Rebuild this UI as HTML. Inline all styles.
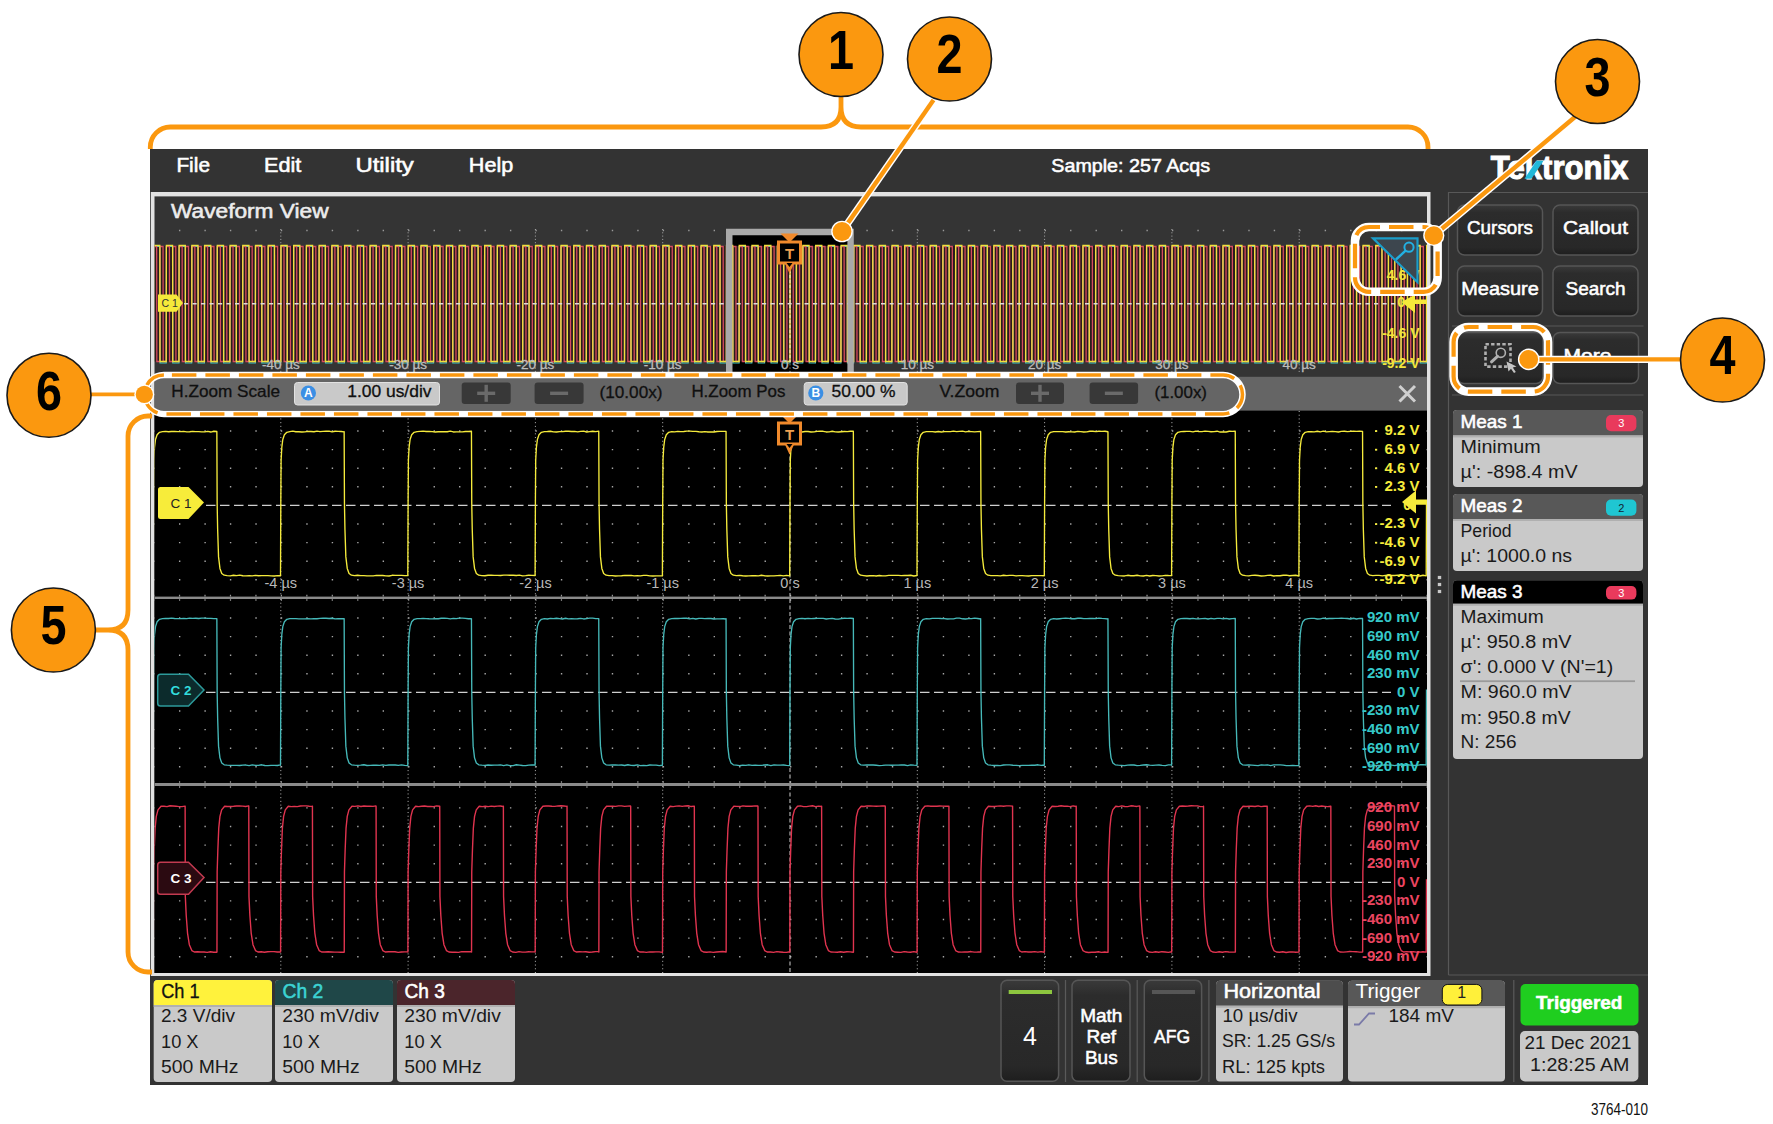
<!DOCTYPE html>
<html><head><meta charset="utf-8"><title>Oscilloscope zoom view</title>
<style>html,body{margin:0;padding:0;background:#fff}svg{display:block}text{font-family:"Liberation Sans",sans-serif}</style></head>
<body>
<svg width="1773" height="1124" viewBox="0 0 1773 1124" font-family="Liberation Sans, sans-serif">
<defs>
<linearGradient id="btn" x1="0" y1="0" x2="0" y2="1"><stop offset="0" stop-color="#3a3a3a"/><stop offset="0.15" stop-color="#2c2c2c"/><stop offset="0.85" stop-color="#282828"/><stop offset="1" stop-color="#1e1e1e"/></linearGradient>
<clipPath id="cpO"><rect x="154.5" y="229" width="1272.5" height="143"/></clipPath>
<clipPath id="cp1"><rect x="154.5" y="411" width="1272.5" height="186"/></clipPath>
<clipPath id="cp2"><rect x="154.5" y="599" width="1272.5" height="184"/></clipPath>
<clipPath id="cp3"><rect x="154.5" y="786" width="1272.5" height="187"/></clipPath>
</defs>
<rect width="1773" height="1124" fill="#fff"/>
<rect x="150" y="149" width="1498" height="936" fill="#333"/>
<rect x="150.8" y="192" width="1279.7" height="784" fill="#e2e2e2"/>
<rect x="154.5" y="196.4" width="1272.5" height="776.6" fill="#343434"/>
<text x="176.4" y="171.8" font-size="20" fill="#fff" font-weight="normal" text-anchor="start" textLength="33.6" lengthAdjust="spacingAndGlyphs"  stroke="#fff" stroke-width="0.55">File</text>
<text x="264" y="171.8" font-size="20" fill="#fff" font-weight="normal" text-anchor="start" textLength="37.3" lengthAdjust="spacingAndGlyphs"  stroke="#fff" stroke-width="0.55">Edit</text>
<text x="355.4" y="171.8" font-size="20" fill="#fff" font-weight="normal" text-anchor="start" textLength="58.4" lengthAdjust="spacingAndGlyphs"  stroke="#fff" stroke-width="0.55">Utility</text>
<text x="468.8" y="171.8" font-size="20" fill="#fff" font-weight="normal" text-anchor="start" textLength="44.4" lengthAdjust="spacingAndGlyphs"  stroke="#fff" stroke-width="0.55">Help</text>
<text x="1051.3" y="172.3" font-size="19" fill="#fff" font-weight="normal" text-anchor="start" textLength="158.7" lengthAdjust="spacingAndGlyphs"  stroke="#fff" stroke-width="0.55">Sample: 257 Acqs</text>
<text x="171" y="218" font-size="20" fill="#ececec" font-weight="normal" text-anchor="start" textLength="157.6" lengthAdjust="spacingAndGlyphs"  stroke="#ececec" stroke-width="0.55">Waveform View</text>
<text x="1490.8" y="178.6" font-size="34" fill="#fff" font-weight="bold" text-anchor="start" textLength="137.6" lengthAdjust="spacingAndGlyphs" stroke="#fff" stroke-width="1.1">Tektronix</text>
<path d="M1524.5 178.8 L1531.5 178.8 L1543.5 160.8 L1536.5 160.8 Z" fill="#22b8d8"/>
<g clip-path="url(#cpO)">
<rect x="732.5" y="233.5" width="115.5" height="140" fill="#000"/>
<line x1="153.5" y1="230.5" x2="1427" y2="230.5" stroke="#999" stroke-width="1.3" stroke-dasharray="1.4 24.060"/>
<line x1="280.8" y1="229" x2="280.8" y2="372" stroke="#aaa" stroke-width="1" stroke-dasharray="1 2.3"/>
<line x1="408.1" y1="229" x2="408.1" y2="372" stroke="#aaa" stroke-width="1" stroke-dasharray="1 2.3"/>
<line x1="535.4" y1="229" x2="535.4" y2="372" stroke="#aaa" stroke-width="1" stroke-dasharray="1 2.3"/>
<line x1="662.7" y1="229" x2="662.7" y2="372" stroke="#aaa" stroke-width="1" stroke-dasharray="1 2.3"/>
<line x1="790.0" y1="229" x2="790.0" y2="372" stroke="#aaa" stroke-width="1" stroke-dasharray="1 2.3"/>
<line x1="917.3" y1="229" x2="917.3" y2="372" stroke="#aaa" stroke-width="1" stroke-dasharray="1 2.3"/>
<line x1="1044.6" y1="229" x2="1044.6" y2="372" stroke="#aaa" stroke-width="1" stroke-dasharray="1 2.3"/>
<line x1="1171.9" y1="229" x2="1171.9" y2="372" stroke="#aaa" stroke-width="1" stroke-dasharray="1 2.3"/>
<line x1="1299.2" y1="229" x2="1299.2" y2="372" stroke="#aaa" stroke-width="1" stroke-dasharray="1 2.3"/>
<rect x="154.5" y="246" width="1272.5" height="115.5" fill="#2a1c1a"/>
<polyline points="140.77,363.00 140.77,363.00 140.92,246.50 147.13,246.50 147.28,363.00 153.50,363.00 153.65,246.50 159.86,246.50 160.01,363.00 166.23,363.00 166.38,246.50 172.59,246.50 172.74,363.00 178.96,363.00 179.11,246.50 185.32,246.50 185.47,363.00 191.69,363.00 191.84,246.50 198.05,246.50 198.20,363.00 204.42,363.00 204.57,246.50 210.78,246.50 210.93,363.00 217.15,363.00 217.30,246.50 223.51,246.50 223.66,363.00 229.88,363.00 230.03,246.50 236.24,246.50 236.39,363.00 242.61,363.00 242.76,246.50 248.97,246.50 249.12,363.00 255.34,363.00 255.49,246.50 261.70,246.50 261.85,363.00 268.07,363.00 268.22,246.50 274.43,246.50 274.58,363.00 280.80,363.00 280.95,246.50 287.16,246.50 287.31,363.00 293.53,363.00 293.68,246.50 299.89,246.50 300.04,363.00 306.26,363.00 306.41,246.50 312.62,246.50 312.77,363.00 318.99,363.00 319.14,246.50 325.35,246.50 325.50,363.00 331.72,363.00 331.87,246.50 338.08,246.50 338.23,363.00 344.45,363.00 344.60,246.50 350.81,246.50 350.96,363.00 357.18,363.00 357.33,246.50 363.54,246.50 363.69,363.00 369.91,363.00 370.06,246.50 376.27,246.50 376.42,363.00 382.64,363.00 382.79,246.50 389.00,246.50 389.15,363.00 395.37,363.00 395.52,246.50 401.73,246.50 401.88,363.00 408.10,363.00 408.25,246.50 414.46,246.50 414.61,363.00 420.83,363.00 420.98,246.50 427.19,246.50 427.34,363.00 433.56,363.00 433.71,246.50 439.92,246.50 440.07,363.00 446.29,363.00 446.44,246.50 452.65,246.50 452.80,363.00 459.02,363.00 459.17,246.50 465.38,246.50 465.53,363.00 471.75,363.00 471.90,246.50 478.11,246.50 478.26,363.00 484.48,363.00 484.63,246.50 490.84,246.50 490.99,363.00 497.21,363.00 497.36,246.50 503.57,246.50 503.72,363.00 509.94,363.00 510.09,246.50 516.30,246.50 516.45,363.00 522.67,363.00 522.82,246.50 529.03,246.50 529.18,363.00 535.40,363.00 535.55,246.50 541.76,246.50 541.91,363.00 548.13,363.00 548.28,246.50 554.49,246.50 554.64,363.00 560.86,363.00 561.01,246.50 567.22,246.50 567.37,363.00 573.59,363.00 573.74,246.50 579.95,246.50 580.10,363.00 586.32,363.00 586.47,246.50 592.68,246.50 592.83,363.00 599.05,363.00 599.20,246.50 605.41,246.50 605.56,363.00 611.78,363.00 611.93,246.50 618.14,246.50 618.29,363.00 624.51,363.00 624.66,246.50 630.87,246.50 631.02,363.00 637.24,363.00 637.39,246.50 643.60,246.50 643.75,363.00 649.97,363.00 650.12,246.50 656.33,246.50 656.48,363.00 662.70,363.00 662.85,246.50 669.06,246.50 669.21,363.00 675.43,363.00 675.58,246.50 681.79,246.50 681.94,363.00 688.16,363.00 688.31,246.50 694.52,246.50 694.67,363.00 700.89,363.00 701.04,246.50 707.25,246.50 707.40,363.00 713.62,363.00 713.77,246.50 719.98,246.50 720.13,363.00 726.35,363.00 726.50,246.50 732.71,246.50 732.86,363.00 739.08,363.00 739.23,246.50 745.44,246.50 745.59,363.00 751.81,363.00 751.96,246.50 758.17,246.50 758.32,363.00 764.54,363.00 764.69,246.50 770.90,246.50 771.05,363.00 777.27,363.00 777.42,246.50 783.63,246.50 783.78,363.00 790.00,363.00 790.15,246.50 796.37,246.50 796.51,363.00 802.73,363.00 802.88,246.50 809.10,246.50 809.25,363.00 815.46,363.00 815.61,246.50 821.83,246.50 821.98,363.00 828.19,363.00 828.34,246.50 834.56,246.50 834.71,363.00 840.92,363.00 841.07,246.50 847.29,246.50 847.44,363.00 853.65,363.00 853.80,246.50 860.02,246.50 860.17,363.00 866.38,363.00 866.53,246.50 872.75,246.50 872.90,363.00 879.11,363.00 879.26,246.50 885.48,246.50 885.63,363.00 891.84,363.00 891.99,246.50 898.21,246.50 898.36,363.00 904.57,363.00 904.72,246.50 910.94,246.50 911.09,363.00 917.30,363.00 917.45,246.50 923.67,246.50 923.82,363.00 930.03,363.00 930.18,246.50 936.40,246.50 936.55,363.00 942.76,363.00 942.91,246.50 949.13,246.50 949.28,363.00 955.49,363.00 955.64,246.50 961.86,246.50 962.01,363.00 968.22,363.00 968.37,246.50 974.59,246.50 974.74,363.00 980.95,363.00 981.10,246.50 987.32,246.50 987.47,363.00 993.68,363.00 993.83,246.50 1000.05,246.50 1000.20,363.00 1006.41,363.00 1006.56,246.50 1012.78,246.50 1012.93,363.00 1019.14,363.00 1019.29,246.50 1025.51,246.50 1025.66,363.00 1031.87,363.00 1032.02,246.50 1038.24,246.50 1038.39,363.00 1044.60,363.00 1044.75,246.50 1050.97,246.50 1051.12,363.00 1057.33,363.00 1057.48,246.50 1063.70,246.50 1063.85,363.00 1070.06,363.00 1070.21,246.50 1076.43,246.50 1076.58,363.00 1082.79,363.00 1082.94,246.50 1089.16,246.50 1089.31,363.00 1095.52,363.00 1095.67,246.50 1101.89,246.50 1102.04,363.00 1108.25,363.00 1108.40,246.50 1114.62,246.50 1114.77,363.00 1120.98,363.00 1121.13,246.50 1127.35,246.50 1127.50,363.00 1133.71,363.00 1133.86,246.50 1140.08,246.50 1140.23,363.00 1146.44,363.00 1146.59,246.50 1152.81,246.50 1152.96,363.00 1159.17,363.00 1159.32,246.50 1165.54,246.50 1165.69,363.00 1171.90,363.00 1172.05,246.50 1178.27,246.50 1178.42,363.00 1184.63,363.00 1184.78,246.50 1191.00,246.50 1191.15,363.00 1197.36,363.00 1197.51,246.50 1203.73,246.50 1203.88,363.00 1210.09,363.00 1210.24,246.50 1216.46,246.50 1216.61,363.00 1222.82,363.00 1222.97,246.50 1229.19,246.50 1229.34,363.00 1235.55,363.00 1235.70,246.50 1241.92,246.50 1242.07,363.00 1248.28,363.00 1248.43,246.50 1254.65,246.50 1254.80,363.00 1261.01,363.00 1261.16,246.50 1267.38,246.50 1267.53,363.00 1273.74,363.00 1273.89,246.50 1280.11,246.50 1280.26,363.00 1286.47,363.00 1286.62,246.50 1292.84,246.50 1292.99,363.00 1299.20,363.00 1299.35,246.50 1305.57,246.50 1305.72,363.00 1311.93,363.00 1312.08,246.50 1318.30,246.50 1318.45,363.00 1324.66,363.00 1324.81,246.50 1331.03,246.50 1331.18,363.00 1337.39,363.00 1337.54,246.50 1343.76,246.50 1343.91,363.00 1350.12,363.00 1350.27,246.50 1356.49,246.50 1356.64,363.00 1362.85,363.00 1363.00,246.50 1369.22,246.50 1369.37,363.00 1375.58,363.00 1375.73,246.50 1381.95,246.50 1382.10,363.00 1388.31,363.00 1388.46,246.50 1394.68,246.50 1394.83,363.00 1401.04,363.00 1401.19,246.50 1407.41,246.50 1407.56,363.00 1413.77,363.00 1413.92,246.50 1420.14,246.50 1420.29,363.00 1426.50,363.00 1426.65,246.50 1432.87,246.50 1433.02,363.00 1439.23,363.00 1439.38,246.50 1445.60,246.50 1445.75,363.00" fill="none" stroke="#3cc" stroke-width="1.2"/>
<polyline points="147.13,361.50 147.13,361.50 147.28,246.50 150.32,246.50 150.47,361.50 153.50,361.50 153.65,246.50 156.68,246.50 156.83,361.50 159.86,361.50 160.01,246.50 163.05,246.50 163.20,361.50 166.23,361.50 166.38,246.50 169.41,246.50 169.56,361.50 172.59,361.50 172.74,246.50 175.78,246.50 175.93,361.50 178.96,361.50 179.11,246.50 182.14,246.50 182.29,361.50 185.32,361.50 185.47,246.50 188.51,246.50 188.66,361.50 191.69,361.50 191.84,246.50 194.87,246.50 195.02,361.50 198.05,361.50 198.20,246.50 201.24,246.50 201.39,361.50 204.42,361.50 204.57,246.50 207.60,246.50 207.75,361.50 210.78,361.50 210.93,246.50 213.97,246.50 214.12,361.50 217.15,361.50 217.30,246.50 220.33,246.50 220.48,361.50 223.51,361.50 223.66,246.50 226.70,246.50 226.85,361.50 229.88,361.50 230.03,246.50 233.06,246.50 233.21,361.50 236.24,361.50 236.39,246.50 239.43,246.50 239.58,361.50 242.61,361.50 242.76,246.50 245.79,246.50 245.94,361.50 248.97,361.50 249.12,246.50 252.16,246.50 252.31,361.50 255.34,361.50 255.49,246.50 258.52,246.50 258.67,361.50 261.70,361.50 261.85,246.50 264.89,246.50 265.04,361.50 268.07,361.50 268.22,246.50 271.25,246.50 271.40,361.50 274.43,361.50 274.58,246.50 277.62,246.50 277.77,361.50 280.80,361.50 280.95,246.50 283.98,246.50 284.13,361.50 287.16,361.50 287.31,246.50 290.35,246.50 290.50,361.50 293.53,361.50 293.68,246.50 296.71,246.50 296.86,361.50 299.89,361.50 300.04,246.50 303.08,246.50 303.23,361.50 306.26,361.50 306.41,246.50 309.44,246.50 309.59,361.50 312.62,361.50 312.77,246.50 315.81,246.50 315.96,361.50 318.99,361.50 319.14,246.50 322.17,246.50 322.32,361.50 325.35,361.50 325.50,246.50 328.54,246.50 328.69,361.50 331.72,361.50 331.87,246.50 334.90,246.50 335.05,361.50 338.08,361.50 338.23,246.50 341.27,246.50 341.42,361.50 344.45,361.50 344.60,246.50 347.63,246.50 347.78,361.50 350.81,361.50 350.96,246.50 354.00,246.50 354.15,361.50 357.18,361.50 357.33,246.50 360.36,246.50 360.51,361.50 363.54,361.50 363.69,246.50 366.73,246.50 366.88,361.50 369.91,361.50 370.06,246.50 373.09,246.50 373.24,361.50 376.27,361.50 376.42,246.50 379.46,246.50 379.61,361.50 382.64,361.50 382.79,246.50 385.82,246.50 385.97,361.50 389.00,361.50 389.15,246.50 392.19,246.50 392.34,361.50 395.37,361.50 395.52,246.50 398.55,246.50 398.70,361.50 401.73,361.50 401.88,246.50 404.92,246.50 405.07,361.50 408.10,361.50 408.25,246.50 411.28,246.50 411.43,361.50 414.46,361.50 414.61,246.50 417.65,246.50 417.80,361.50 420.83,361.50 420.98,246.50 424.01,246.50 424.16,361.50 427.19,361.50 427.34,246.50 430.38,246.50 430.53,361.50 433.56,361.50 433.71,246.50 436.74,246.50 436.89,361.50 439.92,361.50 440.07,246.50 443.11,246.50 443.26,361.50 446.29,361.50 446.44,246.50 449.47,246.50 449.62,361.50 452.65,361.50 452.80,246.50 455.84,246.50 455.99,361.50 459.02,361.50 459.17,246.50 462.20,246.50 462.35,361.50 465.38,361.50 465.53,246.50 468.57,246.50 468.72,361.50 471.75,361.50 471.90,246.50 474.93,246.50 475.08,361.50 478.11,361.50 478.26,246.50 481.30,246.50 481.45,361.50 484.48,361.50 484.63,246.50 487.66,246.50 487.81,361.50 490.84,361.50 490.99,246.50 494.03,246.50 494.18,361.50 497.21,361.50 497.36,246.50 500.39,246.50 500.54,361.50 503.57,361.50 503.72,246.50 506.76,246.50 506.91,361.50 509.94,361.50 510.09,246.50 513.12,246.50 513.27,361.50 516.30,361.50 516.45,246.50 519.49,246.50 519.64,361.50 522.67,361.50 522.82,246.50 525.85,246.50 526.00,361.50 529.03,361.50 529.18,246.50 532.22,246.50 532.37,361.50 535.40,361.50 535.55,246.50 538.58,246.50 538.73,361.50 541.76,361.50 541.91,246.50 544.95,246.50 545.10,361.50 548.13,361.50 548.28,246.50 551.31,246.50 551.46,361.50 554.49,361.50 554.64,246.50 557.68,246.50 557.83,361.50 560.86,361.50 561.01,246.50 564.04,246.50 564.19,361.50 567.22,361.50 567.37,246.50 570.41,246.50 570.56,361.50 573.59,361.50 573.74,246.50 576.77,246.50 576.92,361.50 579.95,361.50 580.10,246.50 583.14,246.50 583.29,361.50 586.32,361.50 586.47,246.50 589.50,246.50 589.65,361.50 592.68,361.50 592.83,246.50 595.87,246.50 596.02,361.50 599.05,361.50 599.20,246.50 602.23,246.50 602.38,361.50 605.41,361.50 605.56,246.50 608.60,246.50 608.75,361.50 611.78,361.50 611.93,246.50 614.96,246.50 615.11,361.50 618.14,361.50 618.29,246.50 621.33,246.50 621.48,361.50 624.51,361.50 624.66,246.50 627.69,246.50 627.84,361.50 630.87,361.50 631.02,246.50 634.06,246.50 634.21,361.50 637.24,361.50 637.39,246.50 640.42,246.50 640.57,361.50 643.60,361.50 643.75,246.50 646.79,246.50 646.94,361.50 649.97,361.50 650.12,246.50 653.15,246.50 653.30,361.50 656.33,361.50 656.48,246.50 659.52,246.50 659.67,361.50 662.70,361.50 662.85,246.50 665.88,246.50 666.03,361.50 669.06,361.50 669.21,246.50 672.25,246.50 672.40,361.50 675.43,361.50 675.58,246.50 678.61,246.50 678.76,361.50 681.79,361.50 681.94,246.50 684.98,246.50 685.13,361.50 688.16,361.50 688.31,246.50 691.34,246.50 691.49,361.50 694.52,361.50 694.67,246.50 697.71,246.50 697.86,361.50 700.89,361.50 701.04,246.50 704.07,246.50 704.22,361.50 707.25,361.50 707.40,246.50 710.44,246.50 710.59,361.50 713.62,361.50 713.77,246.50 716.80,246.50 716.95,361.50 719.98,361.50 720.13,246.50 723.17,246.50 723.32,361.50 726.35,361.50 726.50,246.50 729.53,246.50 729.68,361.50 732.71,361.50 732.86,246.50 735.90,246.50 736.05,361.50 739.08,361.50 739.23,246.50 742.26,246.50 742.41,361.50 745.44,361.50 745.59,246.50 748.63,246.50 748.78,361.50 751.81,361.50 751.96,246.50 754.99,246.50 755.14,361.50 758.17,361.50 758.32,246.50 761.36,246.50 761.51,361.50 764.54,361.50 764.69,246.50 767.72,246.50 767.87,361.50 770.90,361.50 771.05,246.50 774.09,246.50 774.24,361.50 777.27,361.50 777.42,246.50 780.45,246.50 780.60,361.50 783.63,361.50 783.78,246.50 786.82,246.50 786.97,361.50 790.00,361.50 790.15,246.50 793.18,246.50 793.33,361.50 796.37,361.50 796.51,246.50 799.55,246.50 799.70,361.50 802.73,361.50 802.88,246.50 805.91,246.50 806.06,361.50 809.10,361.50 809.25,246.50 812.28,246.50 812.43,361.50 815.46,361.50 815.61,246.50 818.64,246.50 818.79,361.50 821.83,361.50 821.98,246.50 825.01,246.50 825.16,361.50 828.19,361.50 828.34,246.50 831.37,246.50 831.52,361.50 834.56,361.50 834.71,246.50 837.74,246.50 837.89,361.50 840.92,361.50 841.07,246.50 844.10,246.50 844.25,361.50 847.29,361.50 847.44,246.50 850.47,246.50 850.62,361.50 853.65,361.50 853.80,246.50 856.83,246.50 856.98,361.50 860.02,361.50 860.17,246.50 863.20,246.50 863.35,361.50 866.38,361.50 866.53,246.50 869.56,246.50 869.71,361.50 872.75,361.50 872.90,246.50 875.93,246.50 876.08,361.50 879.11,361.50 879.26,246.50 882.29,246.50 882.44,361.50 885.48,361.50 885.63,246.50 888.66,246.50 888.81,361.50 891.84,361.50 891.99,246.50 895.02,246.50 895.17,361.50 898.21,361.50 898.36,246.50 901.39,246.50 901.54,361.50 904.57,361.50 904.72,246.50 907.75,246.50 907.90,361.50 910.94,361.50 911.09,246.50 914.12,246.50 914.27,361.50 917.30,361.50 917.45,246.50 920.48,246.50 920.63,361.50 923.67,361.50 923.82,246.50 926.85,246.50 927.00,361.50 930.03,361.50 930.18,246.50 933.21,246.50 933.36,361.50 936.40,361.50 936.55,246.50 939.58,246.50 939.73,361.50 942.76,361.50 942.91,246.50 945.94,246.50 946.09,361.50 949.13,361.50 949.28,246.50 952.31,246.50 952.46,361.50 955.49,361.50 955.64,246.50 958.67,246.50 958.82,361.50 961.86,361.50 962.01,246.50 965.04,246.50 965.19,361.50 968.22,361.50 968.37,246.50 971.40,246.50 971.55,361.50 974.59,361.50 974.74,246.50 977.77,246.50 977.92,361.50 980.95,361.50 981.10,246.50 984.13,246.50 984.28,361.50 987.32,361.50 987.47,246.50 990.50,246.50 990.65,361.50 993.68,361.50 993.83,246.50 996.86,246.50 997.01,361.50 1000.05,361.50 1000.20,246.50 1003.23,246.50 1003.38,361.50 1006.41,361.50 1006.56,246.50 1009.59,246.50 1009.74,361.50 1012.78,361.50 1012.93,246.50 1015.96,246.50 1016.11,361.50 1019.14,361.50 1019.29,246.50 1022.32,246.50 1022.47,361.50 1025.51,361.50 1025.66,246.50 1028.69,246.50 1028.84,361.50 1031.87,361.50 1032.02,246.50 1035.05,246.50 1035.20,361.50 1038.24,361.50 1038.39,246.50 1041.42,246.50 1041.57,361.50 1044.60,361.50 1044.75,246.50 1047.78,246.50 1047.93,361.50 1050.97,361.50 1051.12,246.50 1054.15,246.50 1054.30,361.50 1057.33,361.50 1057.48,246.50 1060.51,246.50 1060.66,361.50 1063.70,361.50 1063.85,246.50 1066.88,246.50 1067.03,361.50 1070.06,361.50 1070.21,246.50 1073.24,246.50 1073.39,361.50 1076.43,361.50 1076.58,246.50 1079.61,246.50 1079.76,361.50 1082.79,361.50 1082.94,246.50 1085.97,246.50 1086.12,361.50 1089.16,361.50 1089.31,246.50 1092.34,246.50 1092.49,361.50 1095.52,361.50 1095.67,246.50 1098.70,246.50 1098.85,361.50 1101.89,361.50 1102.04,246.50 1105.07,246.50 1105.22,361.50 1108.25,361.50 1108.40,246.50 1111.43,246.50 1111.58,361.50 1114.62,361.50 1114.77,246.50 1117.80,246.50 1117.95,361.50 1120.98,361.50 1121.13,246.50 1124.16,246.50 1124.31,361.50 1127.35,361.50 1127.50,246.50 1130.53,246.50 1130.68,361.50 1133.71,361.50 1133.86,246.50 1136.89,246.50 1137.04,361.50 1140.08,361.50 1140.23,246.50 1143.26,246.50 1143.41,361.50 1146.44,361.50 1146.59,246.50 1149.62,246.50 1149.77,361.50 1152.81,361.50 1152.96,246.50 1155.99,246.50 1156.14,361.50 1159.17,361.50 1159.32,246.50 1162.35,246.50 1162.50,361.50 1165.54,361.50 1165.69,246.50 1168.72,246.50 1168.87,361.50 1171.90,361.50 1172.05,246.50 1175.08,246.50 1175.23,361.50 1178.27,361.50 1178.42,246.50 1181.45,246.50 1181.60,361.50 1184.63,361.50 1184.78,246.50 1187.81,246.50 1187.96,361.50 1191.00,361.50 1191.15,246.50 1194.18,246.50 1194.33,361.50 1197.36,361.50 1197.51,246.50 1200.54,246.50 1200.69,361.50 1203.73,361.50 1203.88,246.50 1206.91,246.50 1207.06,361.50 1210.09,361.50 1210.24,246.50 1213.27,246.50 1213.42,361.50 1216.46,361.50 1216.61,246.50 1219.64,246.50 1219.79,361.50 1222.82,361.50 1222.97,246.50 1226.00,246.50 1226.15,361.50 1229.19,361.50 1229.34,246.50 1232.37,246.50 1232.52,361.50 1235.55,361.50 1235.70,246.50 1238.73,246.50 1238.88,361.50 1241.92,361.50 1242.07,246.50 1245.10,246.50 1245.25,361.50 1248.28,361.50 1248.43,246.50 1251.46,246.50 1251.61,361.50 1254.65,361.50 1254.80,246.50 1257.83,246.50 1257.98,361.50 1261.01,361.50 1261.16,246.50 1264.19,246.50 1264.34,361.50 1267.38,361.50 1267.53,246.50 1270.56,246.50 1270.71,361.50 1273.74,361.50 1273.89,246.50 1276.92,246.50 1277.07,361.50 1280.11,361.50 1280.26,246.50 1283.29,246.50 1283.44,361.50 1286.47,361.50 1286.62,246.50 1289.65,246.50 1289.80,361.50 1292.84,361.50 1292.99,246.50 1296.02,246.50 1296.17,361.50 1299.20,361.50 1299.35,246.50 1302.38,246.50 1302.53,361.50 1305.57,361.50 1305.72,246.50 1308.75,246.50 1308.90,361.50 1311.93,361.50 1312.08,246.50 1315.11,246.50 1315.26,361.50 1318.30,361.50 1318.45,246.50 1321.48,246.50 1321.63,361.50 1324.66,361.50 1324.81,246.50 1327.84,246.50 1327.99,361.50 1331.03,361.50 1331.18,246.50 1334.21,246.50 1334.36,361.50 1337.39,361.50 1337.54,246.50 1340.57,246.50 1340.72,361.50 1343.76,361.50 1343.91,246.50 1346.94,246.50 1347.09,361.50 1350.12,361.50 1350.27,246.50 1353.30,246.50 1353.45,361.50 1356.49,361.50 1356.64,246.50 1359.67,246.50 1359.82,361.50 1362.85,361.50 1363.00,246.50 1366.03,246.50 1366.18,361.50 1369.22,361.50 1369.37,246.50 1372.40,246.50 1372.55,361.50 1375.58,361.50 1375.73,246.50 1378.76,246.50 1378.91,361.50 1381.95,361.50 1382.10,246.50 1385.13,246.50 1385.28,361.50 1388.31,361.50 1388.46,246.50 1391.49,246.50 1391.64,361.50 1394.68,361.50 1394.83,246.50 1397.86,246.50 1398.01,361.50 1401.04,361.50 1401.19,246.50 1404.22,246.50 1404.37,361.50 1407.41,361.50 1407.56,246.50 1410.59,246.50 1410.74,361.50 1413.77,361.50 1413.92,246.50 1416.95,246.50 1417.10,361.50 1420.14,361.50 1420.29,246.50 1423.32,246.50 1423.47,361.50 1426.50,361.50 1426.65,246.50 1429.68,246.50 1429.83,361.50 1432.87,361.50 1433.02,246.50 1436.05,246.50 1436.20,361.50" fill="none" stroke="#d64a60" stroke-width="1.3"/>
<polyline points="140.77,361.50 140.77,361.50 140.92,245.50 147.13,245.50 147.28,361.50 153.50,361.50 153.65,245.50 159.86,245.50 160.01,361.50 166.23,361.50 166.38,245.50 172.59,245.50 172.74,361.50 178.96,361.50 179.11,245.50 185.32,245.50 185.47,361.50 191.69,361.50 191.84,245.50 198.05,245.50 198.20,361.50 204.42,361.50 204.57,245.50 210.78,245.50 210.93,361.50 217.15,361.50 217.30,245.50 223.51,245.50 223.66,361.50 229.88,361.50 230.03,245.50 236.24,245.50 236.39,361.50 242.61,361.50 242.76,245.50 248.97,245.50 249.12,361.50 255.34,361.50 255.49,245.50 261.70,245.50 261.85,361.50 268.07,361.50 268.22,245.50 274.43,245.50 274.58,361.50 280.80,361.50 280.95,245.50 287.16,245.50 287.31,361.50 293.53,361.50 293.68,245.50 299.89,245.50 300.04,361.50 306.26,361.50 306.41,245.50 312.62,245.50 312.77,361.50 318.99,361.50 319.14,245.50 325.35,245.50 325.50,361.50 331.72,361.50 331.87,245.50 338.08,245.50 338.23,361.50 344.45,361.50 344.60,245.50 350.81,245.50 350.96,361.50 357.18,361.50 357.33,245.50 363.54,245.50 363.69,361.50 369.91,361.50 370.06,245.50 376.27,245.50 376.42,361.50 382.64,361.50 382.79,245.50 389.00,245.50 389.15,361.50 395.37,361.50 395.52,245.50 401.73,245.50 401.88,361.50 408.10,361.50 408.25,245.50 414.46,245.50 414.61,361.50 420.83,361.50 420.98,245.50 427.19,245.50 427.34,361.50 433.56,361.50 433.71,245.50 439.92,245.50 440.07,361.50 446.29,361.50 446.44,245.50 452.65,245.50 452.80,361.50 459.02,361.50 459.17,245.50 465.38,245.50 465.53,361.50 471.75,361.50 471.90,245.50 478.11,245.50 478.26,361.50 484.48,361.50 484.63,245.50 490.84,245.50 490.99,361.50 497.21,361.50 497.36,245.50 503.57,245.50 503.72,361.50 509.94,361.50 510.09,245.50 516.30,245.50 516.45,361.50 522.67,361.50 522.82,245.50 529.03,245.50 529.18,361.50 535.40,361.50 535.55,245.50 541.76,245.50 541.91,361.50 548.13,361.50 548.28,245.50 554.49,245.50 554.64,361.50 560.86,361.50 561.01,245.50 567.22,245.50 567.37,361.50 573.59,361.50 573.74,245.50 579.95,245.50 580.10,361.50 586.32,361.50 586.47,245.50 592.68,245.50 592.83,361.50 599.05,361.50 599.20,245.50 605.41,245.50 605.56,361.50 611.78,361.50 611.93,245.50 618.14,245.50 618.29,361.50 624.51,361.50 624.66,245.50 630.87,245.50 631.02,361.50 637.24,361.50 637.39,245.50 643.60,245.50 643.75,361.50 649.97,361.50 650.12,245.50 656.33,245.50 656.48,361.50 662.70,361.50 662.85,245.50 669.06,245.50 669.21,361.50 675.43,361.50 675.58,245.50 681.79,245.50 681.94,361.50 688.16,361.50 688.31,245.50 694.52,245.50 694.67,361.50 700.89,361.50 701.04,245.50 707.25,245.50 707.40,361.50 713.62,361.50 713.77,245.50 719.98,245.50 720.13,361.50 726.35,361.50 726.50,245.50 732.71,245.50 732.86,361.50 739.08,361.50 739.23,245.50 745.44,245.50 745.59,361.50 751.81,361.50 751.96,245.50 758.17,245.50 758.32,361.50 764.54,361.50 764.69,245.50 770.90,245.50 771.05,361.50 777.27,361.50 777.42,245.50 783.63,245.50 783.78,361.50 790.00,361.50 790.15,245.50 796.37,245.50 796.51,361.50 802.73,361.50 802.88,245.50 809.10,245.50 809.25,361.50 815.46,361.50 815.61,245.50 821.83,245.50 821.98,361.50 828.19,361.50 828.34,245.50 834.56,245.50 834.71,361.50 840.92,361.50 841.07,245.50 847.29,245.50 847.44,361.50 853.65,361.50 853.80,245.50 860.02,245.50 860.17,361.50 866.38,361.50 866.53,245.50 872.75,245.50 872.90,361.50 879.11,361.50 879.26,245.50 885.48,245.50 885.63,361.50 891.84,361.50 891.99,245.50 898.21,245.50 898.36,361.50 904.57,361.50 904.72,245.50 910.94,245.50 911.09,361.50 917.30,361.50 917.45,245.50 923.67,245.50 923.82,361.50 930.03,361.50 930.18,245.50 936.40,245.50 936.55,361.50 942.76,361.50 942.91,245.50 949.13,245.50 949.28,361.50 955.49,361.50 955.64,245.50 961.86,245.50 962.01,361.50 968.22,361.50 968.37,245.50 974.59,245.50 974.74,361.50 980.95,361.50 981.10,245.50 987.32,245.50 987.47,361.50 993.68,361.50 993.83,245.50 1000.05,245.50 1000.20,361.50 1006.41,361.50 1006.56,245.50 1012.78,245.50 1012.93,361.50 1019.14,361.50 1019.29,245.50 1025.51,245.50 1025.66,361.50 1031.87,361.50 1032.02,245.50 1038.24,245.50 1038.39,361.50 1044.60,361.50 1044.75,245.50 1050.97,245.50 1051.12,361.50 1057.33,361.50 1057.48,245.50 1063.70,245.50 1063.85,361.50 1070.06,361.50 1070.21,245.50 1076.43,245.50 1076.58,361.50 1082.79,361.50 1082.94,245.50 1089.16,245.50 1089.31,361.50 1095.52,361.50 1095.67,245.50 1101.89,245.50 1102.04,361.50 1108.25,361.50 1108.40,245.50 1114.62,245.50 1114.77,361.50 1120.98,361.50 1121.13,245.50 1127.35,245.50 1127.50,361.50 1133.71,361.50 1133.86,245.50 1140.08,245.50 1140.23,361.50 1146.44,361.50 1146.59,245.50 1152.81,245.50 1152.96,361.50 1159.17,361.50 1159.32,245.50 1165.54,245.50 1165.69,361.50 1171.90,361.50 1172.05,245.50 1178.27,245.50 1178.42,361.50 1184.63,361.50 1184.78,245.50 1191.00,245.50 1191.15,361.50 1197.36,361.50 1197.51,245.50 1203.73,245.50 1203.88,361.50 1210.09,361.50 1210.24,245.50 1216.46,245.50 1216.61,361.50 1222.82,361.50 1222.97,245.50 1229.19,245.50 1229.34,361.50 1235.55,361.50 1235.70,245.50 1241.92,245.50 1242.07,361.50 1248.28,361.50 1248.43,245.50 1254.65,245.50 1254.80,361.50 1261.01,361.50 1261.16,245.50 1267.38,245.50 1267.53,361.50 1273.74,361.50 1273.89,245.50 1280.11,245.50 1280.26,361.50 1286.47,361.50 1286.62,245.50 1292.84,245.50 1292.99,361.50 1299.20,361.50 1299.35,245.50 1305.57,245.50 1305.72,361.50 1311.93,361.50 1312.08,245.50 1318.30,245.50 1318.45,361.50 1324.66,361.50 1324.81,245.50 1331.03,245.50 1331.18,361.50 1337.39,361.50 1337.54,245.50 1343.76,245.50 1343.91,361.50 1350.12,361.50 1350.27,245.50 1356.49,245.50 1356.64,361.50 1362.85,361.50 1363.00,245.50 1369.22,245.50 1369.37,361.50 1375.58,361.50 1375.73,245.50 1381.95,245.50 1382.10,361.50 1388.31,361.50 1388.46,245.50 1394.68,245.50 1394.83,361.50 1401.04,361.50 1401.19,245.50 1407.41,245.50 1407.56,361.50 1413.77,361.50 1413.92,245.50 1420.14,245.50 1420.29,361.50 1426.50,361.50 1426.65,245.50 1432.87,245.50 1433.02,361.50 1439.23,361.50 1439.38,245.50 1445.60,245.50 1445.75,361.50" fill="none" stroke="#efe23c" stroke-width="1.3" shape-rendering="geometricPrecision"/>
<line x1="184" y1="303.8" x2="1400" y2="303.8" stroke="#dcdcdc" stroke-width="1.4" stroke-dasharray="4.2 4.3"/>
</g>
<path d="M729.2 373 V232 H850.6 V373" fill="none" stroke="#a9a9a9" stroke-width="6.4"/>
<text x="280.8" y="368.8" font-size="13.5" fill="#bdbdbd" font-weight="normal" text-anchor="middle"  stroke="#bdbdbd" stroke-width="0.3">-40 µs</text>
<text x="408.1" y="368.8" font-size="13.5" fill="#bdbdbd" font-weight="normal" text-anchor="middle"  stroke="#bdbdbd" stroke-width="0.3">-30 µs</text>
<text x="535.4" y="368.8" font-size="13.5" fill="#bdbdbd" font-weight="normal" text-anchor="middle"  stroke="#bdbdbd" stroke-width="0.3">-20 µs</text>
<text x="662.7" y="368.8" font-size="13.5" fill="#bdbdbd" font-weight="normal" text-anchor="middle"  stroke="#bdbdbd" stroke-width="0.3">-10 µs</text>
<text x="790.0" y="368.8" font-size="13.5" fill="#bdbdbd" font-weight="normal" text-anchor="middle"  stroke="#bdbdbd" stroke-width="0.3">0 s</text>
<text x="917.3" y="368.8" font-size="13.5" fill="#bdbdbd" font-weight="normal" text-anchor="middle"  stroke="#bdbdbd" stroke-width="0.3">10 µs</text>
<text x="1044.6" y="368.8" font-size="13.5" fill="#bdbdbd" font-weight="normal" text-anchor="middle"  stroke="#bdbdbd" stroke-width="0.3">20 µs</text>
<text x="1171.9" y="368.8" font-size="13.5" fill="#bdbdbd" font-weight="normal" text-anchor="middle"  stroke="#bdbdbd" stroke-width="0.3">30 µs</text>
<text x="1299.2" y="368.8" font-size="13.5" fill="#bdbdbd" font-weight="normal" text-anchor="middle"  stroke="#bdbdbd" stroke-width="0.3">40 µs</text>
<text x="1419.5" y="279.5" font-size="14" fill="#f2e63c" font-weight="bold" text-anchor="end" >4.6 V</text>
<text x="1419.5" y="338" font-size="14" fill="#f2e63c" font-weight="bold" text-anchor="end" >-4.6 V</text>
<text x="1419.5" y="367.5" font-size="14" fill="#f2e63c" font-weight="bold" text-anchor="end" >-9.2 V</text>
<text x="1405" y="307" font-size="14" fill="#f2e63c" font-weight="bold" text-anchor="end" >0</text>
<path d="M158 294.5 H176.5 L183 303 L176.5 311.8 H158 Z" fill="#f5e93a"/>
<text x="161.5" y="307" font-size="10.5" fill="#333" font-weight="normal" text-anchor="start" >C 1</text>
<path d="M1401.6 302 L1415 294.5 V299.5 H1427 V304 H1415 V313 Z" fill="#f5e93a"/>
<line x1="790.0" y1="270" x2="790.0" y2="362" stroke="#e8e0b0" stroke-width="1.4" stroke-dasharray="3 2"/>
<path d="M780.5 233.5 H798.5 L789.5 242.5 Z" fill="#f08a2c"/>
<rect x="778.5" y="242.0" width="22" height="21" fill="#000" stroke="#f08a2c" stroke-width="3"/>
<path d="M784.5 262.5 L789.5 273.5 L794.5 262.5 Z" fill="#f08a2c"/>
<path d="M786.5 263.1 L789.5 267.0 L792.5 263.1 Z" fill="#000"/>
<text x="789.5" y="259.0" font-size="15" fill="#f0a050" font-weight="bold" text-anchor="middle" >T</text>
<path d="M1373 238.3 H1417.5 V282.2 Z" fill="#3d464e" stroke="#1b9dc9" stroke-width="2.2" stroke-linejoin="miter"/>
<circle cx="1409" cy="247.2" r="4.6" fill="none" stroke="#22b0e2" stroke-width="2"/>
<line x1="1405.6" y1="250.6" x2="1396" y2="259.5" stroke="#22b0e2" stroke-width="2.4"/>
<rect x="154.5" y="376.8" width="1272.5" height="34" fill="#656565"/>
<text x="171.3" y="397.2" font-size="17" fill="#101010" font-weight="normal" text-anchor="start" textLength="108.7" lengthAdjust="spacingAndGlyphs"  stroke="#101010" stroke-width="0.3">H.Zoom Scale</text>
<rect x="294.5" y="382.5" width="145" height="22.5" rx="3" fill="#c9c9c9" stroke="#e2e2e2" stroke-width="1"/>
<circle cx="308.4" cy="393" r="7.6" fill="#3b8fe4"/>
<text x="308.4" y="397.3" font-size="12" fill="#fff" font-weight="bold" text-anchor="middle" >A</text>
<text x="431.5" y="397.2" font-size="17" fill="#101010" font-weight="normal" text-anchor="end" textLength="84.3" lengthAdjust="spacingAndGlyphs"  stroke="#101010" stroke-width="0.3">1.00 us/div</text>
<rect x="461.7" y="382.5" width="49" height="21.5" rx="3" fill="#383838"/>
<rect x="477.2" y="391.6" width="18" height="3.4" fill="#6a6a6a"/>
<rect x="484.5" y="384.8" width="3.4" height="17" fill="#6a6a6a"/>
<rect x="534.6" y="382.5" width="49" height="21.5" rx="3" fill="#383838"/>
<rect x="550.1" y="391.6" width="18" height="3.4" fill="#6a6a6a"/>
<text x="599.5" y="398" font-size="17" fill="#101010" font-weight="normal" text-anchor="start" textLength="63" lengthAdjust="spacingAndGlyphs"  stroke="#101010" stroke-width="0.3">(10.00x)</text>
<text x="691.4" y="397.2" font-size="17" fill="#101010" font-weight="normal" text-anchor="start" textLength="94" lengthAdjust="spacingAndGlyphs"  stroke="#101010" stroke-width="0.3">H.Zoom Pos</text>
<rect x="804.2" y="382.5" width="103" height="22.5" rx="3" fill="#c9c9c9" stroke="#e2e2e2" stroke-width="1"/>
<circle cx="815.8" cy="393" r="7.6" fill="#3b8fe4"/>
<text x="815.8" y="397.3" font-size="12" fill="#fff" font-weight="bold" text-anchor="middle" >B</text>
<text x="831.5" y="397.2" font-size="17" fill="#101010" font-weight="normal" text-anchor="start" textLength="64" lengthAdjust="spacingAndGlyphs"  stroke="#101010" stroke-width="0.3">50.00 %</text>
<text x="939.4" y="397.2" font-size="17" fill="#101010" font-weight="normal" text-anchor="start" textLength="60" lengthAdjust="spacingAndGlyphs"  stroke="#101010" stroke-width="0.3">V.Zoom</text>
<rect x="1016" y="382.5" width="48" height="21.5" rx="3" fill="#383838"/>
<rect x="1031.0" y="391.6" width="18" height="3.4" fill="#6a6a6a"/>
<rect x="1038.3" y="384.8" width="3.4" height="17" fill="#6a6a6a"/>
<rect x="1089.6" y="382.5" width="48.5" height="21.5" rx="3" fill="#383838"/>
<rect x="1104.85" y="391.6" width="18" height="3.4" fill="#6a6a6a"/>
<text x="1154.4" y="398" font-size="17" fill="#101010" font-weight="normal" text-anchor="start" textLength="52.6" lengthAdjust="spacingAndGlyphs"  stroke="#101010" stroke-width="0.3">(1.00x)</text>
<path d="M1399.5 386 L1415 401.5 M1415 386 L1399.5 401.5" stroke="#cfcfcf" stroke-width="3" fill="none"/>
<rect x="154.5" y="410.7" width="1272.5" height="562.3" fill="#000"/>
<rect x="154.5" y="596.6" width="1272.5" height="2.4" fill="#8a8a8a"/>
<rect x="154.5" y="783" width="1272.5" height="3" fill="#8a8a8a"/>
<g clip-path="url(#cp1)">
<line x1="153.50" y1="431.00" x2="1427" y2="431.00" stroke="#a6a6a6" stroke-width="1.4" stroke-dasharray="1.4 24.060"/>
<line x1="153.50" y1="449.60" x2="1427" y2="449.60" stroke="#a6a6a6" stroke-width="1.4" stroke-dasharray="1.4 24.060"/>
<line x1="153.50" y1="468.20" x2="1427" y2="468.20" stroke="#a6a6a6" stroke-width="1.4" stroke-dasharray="1.4 24.060"/>
<line x1="153.50" y1="486.80" x2="1427" y2="486.80" stroke="#a6a6a6" stroke-width="1.4" stroke-dasharray="1.4 24.060"/>
<line x1="153.50" y1="524.00" x2="1427" y2="524.00" stroke="#a6a6a6" stroke-width="1.4" stroke-dasharray="1.4 24.060"/>
<line x1="153.50" y1="542.60" x2="1427" y2="542.60" stroke="#a6a6a6" stroke-width="1.4" stroke-dasharray="1.4 24.060"/>
<line x1="153.50" y1="561.20" x2="1427" y2="561.20" stroke="#a6a6a6" stroke-width="1.4" stroke-dasharray="1.4 24.060"/>
<line x1="153.50" y1="579.80" x2="1427" y2="579.80" stroke="#a6a6a6" stroke-width="1.4" stroke-dasharray="1.4 24.060"/>
<line x1="153.50" y1="595.60" x2="1427" y2="595.60" stroke="#999" stroke-width="1.6" stroke-dasharray="1.2 24.260"/>
<line x1="280.80" y1="411" x2="280.80" y2="596.6" stroke="#b8b8b8" stroke-width="1" stroke-dasharray="1 2.72"/>
<line x1="408.10" y1="411" x2="408.10" y2="596.6" stroke="#b8b8b8" stroke-width="1" stroke-dasharray="1 2.72"/>
<line x1="535.40" y1="411" x2="535.40" y2="596.6" stroke="#b8b8b8" stroke-width="1" stroke-dasharray="1 2.72"/>
<line x1="662.70" y1="411" x2="662.70" y2="596.6" stroke="#b8b8b8" stroke-width="1" stroke-dasharray="1 2.72"/>
<line x1="790.00" y1="411" x2="790.00" y2="596.6" stroke="#d0d0d0" stroke-width="1" stroke-dasharray="4 2.5"/>
<line x1="917.30" y1="411" x2="917.30" y2="596.6" stroke="#b8b8b8" stroke-width="1" stroke-dasharray="1 2.72"/>
<line x1="1044.60" y1="411" x2="1044.60" y2="596.6" stroke="#b8b8b8" stroke-width="1" stroke-dasharray="1 2.72"/>
<line x1="1171.90" y1="411" x2="1171.90" y2="596.6" stroke="#b8b8b8" stroke-width="1" stroke-dasharray="1 2.72"/>
<line x1="1299.20" y1="411" x2="1299.20" y2="596.6" stroke="#b8b8b8" stroke-width="1" stroke-dasharray="1 2.72"/>
<line x1="206" y1="505.4" x2="1391" y2="505.4" stroke="#cfcfcf" stroke-width="1.3" stroke-dasharray="9.5 4.5"/>
</g>
<g clip-path="url(#cp2)">
<line x1="153.50" y1="618.00" x2="1427" y2="618.00" stroke="#a6a6a6" stroke-width="1.4" stroke-dasharray="1.4 24.060"/>
<line x1="153.50" y1="636.60" x2="1427" y2="636.60" stroke="#a6a6a6" stroke-width="1.4" stroke-dasharray="1.4 24.060"/>
<line x1="153.50" y1="655.20" x2="1427" y2="655.20" stroke="#a6a6a6" stroke-width="1.4" stroke-dasharray="1.4 24.060"/>
<line x1="153.50" y1="673.80" x2="1427" y2="673.80" stroke="#a6a6a6" stroke-width="1.4" stroke-dasharray="1.4 24.060"/>
<line x1="153.50" y1="711.00" x2="1427" y2="711.00" stroke="#a6a6a6" stroke-width="1.4" stroke-dasharray="1.4 24.060"/>
<line x1="153.50" y1="729.60" x2="1427" y2="729.60" stroke="#a6a6a6" stroke-width="1.4" stroke-dasharray="1.4 24.060"/>
<line x1="153.50" y1="748.20" x2="1427" y2="748.20" stroke="#a6a6a6" stroke-width="1.4" stroke-dasharray="1.4 24.060"/>
<line x1="153.50" y1="766.80" x2="1427" y2="766.80" stroke="#a6a6a6" stroke-width="1.4" stroke-dasharray="1.4 24.060"/>
<line x1="153.50" y1="600.00" x2="1427" y2="600.00" stroke="#999" stroke-width="1.6" stroke-dasharray="1.2 24.260"/>
<line x1="153.50" y1="782.00" x2="1427" y2="782.00" stroke="#999" stroke-width="1.6" stroke-dasharray="1.2 24.260"/>
<line x1="280.80" y1="599" x2="280.80" y2="783" stroke="#b8b8b8" stroke-width="1" stroke-dasharray="1 2.72"/>
<line x1="408.10" y1="599" x2="408.10" y2="783" stroke="#b8b8b8" stroke-width="1" stroke-dasharray="1 2.72"/>
<line x1="535.40" y1="599" x2="535.40" y2="783" stroke="#b8b8b8" stroke-width="1" stroke-dasharray="1 2.72"/>
<line x1="662.70" y1="599" x2="662.70" y2="783" stroke="#b8b8b8" stroke-width="1" stroke-dasharray="1 2.72"/>
<line x1="790.00" y1="599" x2="790.00" y2="783" stroke="#d0d0d0" stroke-width="1" stroke-dasharray="4 2.5"/>
<line x1="917.30" y1="599" x2="917.30" y2="783" stroke="#b8b8b8" stroke-width="1" stroke-dasharray="1 2.72"/>
<line x1="1044.60" y1="599" x2="1044.60" y2="783" stroke="#b8b8b8" stroke-width="1" stroke-dasharray="1 2.72"/>
<line x1="1171.90" y1="599" x2="1171.90" y2="783" stroke="#b8b8b8" stroke-width="1" stroke-dasharray="1 2.72"/>
<line x1="1299.20" y1="599" x2="1299.20" y2="783" stroke="#b8b8b8" stroke-width="1" stroke-dasharray="1 2.72"/>
<line x1="206" y1="692.4" x2="1391" y2="692.4" stroke="#cfcfcf" stroke-width="1.3" stroke-dasharray="9.5 4.5"/>
</g>
<g clip-path="url(#cp3)">
<line x1="153.50" y1="807.90" x2="1427" y2="807.90" stroke="#a6a6a6" stroke-width="1.4" stroke-dasharray="1.4 24.060"/>
<line x1="153.50" y1="826.50" x2="1427" y2="826.50" stroke="#a6a6a6" stroke-width="1.4" stroke-dasharray="1.4 24.060"/>
<line x1="153.50" y1="845.10" x2="1427" y2="845.10" stroke="#a6a6a6" stroke-width="1.4" stroke-dasharray="1.4 24.060"/>
<line x1="153.50" y1="863.70" x2="1427" y2="863.70" stroke="#a6a6a6" stroke-width="1.4" stroke-dasharray="1.4 24.060"/>
<line x1="153.50" y1="900.90" x2="1427" y2="900.90" stroke="#a6a6a6" stroke-width="1.4" stroke-dasharray="1.4 24.060"/>
<line x1="153.50" y1="919.50" x2="1427" y2="919.50" stroke="#a6a6a6" stroke-width="1.4" stroke-dasharray="1.4 24.060"/>
<line x1="153.50" y1="938.10" x2="1427" y2="938.10" stroke="#a6a6a6" stroke-width="1.4" stroke-dasharray="1.4 24.060"/>
<line x1="153.50" y1="956.70" x2="1427" y2="956.70" stroke="#a6a6a6" stroke-width="1.4" stroke-dasharray="1.4 24.060"/>
<line x1="153.50" y1="787.00" x2="1427" y2="787.00" stroke="#999" stroke-width="1.6" stroke-dasharray="1.2 24.260"/>
<line x1="280.80" y1="786" x2="280.80" y2="973" stroke="#b8b8b8" stroke-width="1" stroke-dasharray="1 2.72"/>
<line x1="408.10" y1="786" x2="408.10" y2="973" stroke="#b8b8b8" stroke-width="1" stroke-dasharray="1 2.72"/>
<line x1="535.40" y1="786" x2="535.40" y2="973" stroke="#b8b8b8" stroke-width="1" stroke-dasharray="1 2.72"/>
<line x1="662.70" y1="786" x2="662.70" y2="973" stroke="#b8b8b8" stroke-width="1" stroke-dasharray="1 2.72"/>
<line x1="790.00" y1="786" x2="790.00" y2="973" stroke="#d0d0d0" stroke-width="1" stroke-dasharray="4 2.5"/>
<line x1="917.30" y1="786" x2="917.30" y2="973" stroke="#b8b8b8" stroke-width="1" stroke-dasharray="1 2.72"/>
<line x1="1044.60" y1="786" x2="1044.60" y2="973" stroke="#b8b8b8" stroke-width="1" stroke-dasharray="1 2.72"/>
<line x1="1171.90" y1="786" x2="1171.90" y2="973" stroke="#b8b8b8" stroke-width="1" stroke-dasharray="1 2.72"/>
<line x1="1299.20" y1="786" x2="1299.20" y2="973" stroke="#b8b8b8" stroke-width="1" stroke-dasharray="1 2.72"/>
<line x1="206" y1="882.3" x2="1391" y2="882.3" stroke="#cfcfcf" stroke-width="1.3" stroke-dasharray="9.5 4.5"/>
</g>
<g clip-path="url(#cp1)">
<polyline points="25.90,575.60 26.20,503.60 26.50,460.40 27.20,447.44 28.20,439.52 29.80,434.77 32.20,432.30 35.20,431.60 38.22,431.44 41.24,431.29 44.26,431.74 47.28,431.22 50.30,431.63 53.32,431.48 56.34,431.20 59.36,431.61 62.38,431.18 65.39,431.54 68.41,431.21 71.43,431.23 74.45,431.53 77.47,431.89 80.49,431.26 83.51,431.35 86.53,431.71 89.55,432.00 89.55,431.60 89.85,503.60 90.35,529.52 91.25,556.88 92.65,568.40 94.45,573.44 96.85,575.20 99.85,575.60 102.99,575.67 106.13,575.51 109.26,576.03 112.40,575.19 115.54,575.92 118.68,575.41 121.82,575.28 124.96,575.26 128.09,575.43 131.23,575.88 134.37,575.31 137.51,575.67 140.65,575.73 143.79,575.49 146.92,575.64 150.06,575.21 153.20,575.20 153.20,575.60 153.50,503.60 153.80,460.40 154.50,447.44 155.50,439.52 157.10,434.77 159.50,432.30 162.50,431.60 165.52,431.34 168.54,431.76 171.56,431.53 174.58,431.43 177.60,431.68 180.62,431.56 183.64,431.42 186.66,431.86 189.68,431.78 192.69,431.37 195.71,431.67 198.73,431.62 201.75,431.94 204.77,431.81 207.79,431.41 210.81,432.03 213.83,431.26 216.85,431.53 216.85,431.60 217.15,503.60 217.65,529.52 218.55,556.88 219.95,568.40 221.75,573.44 224.15,575.20 227.15,575.60 230.29,575.83 233.43,575.29 236.56,575.59 239.70,575.19 242.84,575.75 245.98,575.84 249.12,575.67 252.26,575.94 255.39,575.43 258.53,575.78 261.67,575.68 264.81,575.67 267.95,575.56 271.09,575.91 274.22,576.00 277.36,575.58 280.50,575.75 280.50,575.60 280.80,503.60 281.10,460.40 281.80,447.44 282.80,439.52 284.40,434.77 286.80,432.30 289.80,431.60 292.82,431.20 295.84,431.78 298.86,431.73 301.88,432.04 304.90,431.89 307.92,431.41 310.94,431.50 313.96,431.75 316.98,431.17 319.99,431.57 323.01,431.30 326.03,431.26 329.05,431.20 332.07,431.84 335.09,431.27 338.11,431.37 341.13,431.50 344.15,431.93 344.15,431.60 344.45,503.60 344.95,529.52 345.85,556.88 347.25,568.40 349.05,573.44 351.45,575.20 354.45,575.60 357.59,575.22 360.73,575.55 363.86,575.64 367.00,575.95 370.14,575.89 373.28,575.93 376.42,575.40 379.56,575.52 382.69,575.47 385.83,575.95 388.97,576.01 392.11,575.29 395.25,575.31 398.39,575.36 401.52,575.36 404.66,575.59 407.80,575.68 407.80,575.60 408.10,503.60 408.40,460.40 409.10,447.44 410.10,439.52 411.70,434.77 414.10,432.30 417.10,431.60 420.12,431.39 423.14,431.15 426.16,431.53 429.18,431.48 432.20,431.66 435.22,432.01 438.24,431.77 441.26,431.61 444.28,431.71 447.29,431.76 450.31,431.20 453.33,431.96 456.35,431.85 459.37,431.94 462.39,431.87 465.41,431.50 468.43,431.51 471.45,431.24 471.45,431.60 471.75,503.60 472.25,529.52 473.15,556.88 474.55,568.40 476.35,573.44 478.75,575.20 481.75,575.60 484.89,575.72 488.03,575.21 491.16,575.21 494.30,575.34 497.44,575.30 500.58,575.46 503.72,575.20 506.86,575.15 509.99,575.29 513.13,575.24 516.27,575.48 519.41,575.17 522.55,575.94 525.69,575.70 528.82,575.28 531.96,575.38 535.10,575.46 535.10,575.60 535.40,503.60 535.70,460.40 536.40,447.44 537.40,439.52 539.00,434.77 541.40,432.30 544.40,431.60 547.42,431.48 550.44,431.26 553.46,431.91 556.48,432.04 559.50,431.57 562.52,431.59 565.54,431.23 568.56,431.24 571.58,431.46 574.59,431.39 577.61,431.90 580.63,431.30 583.65,431.17 586.67,432.01 589.69,431.63 592.71,431.28 595.73,431.64 598.75,431.17 598.75,431.60 599.05,503.60 599.55,529.52 600.45,556.88 601.85,568.40 603.65,573.44 606.05,575.20 609.05,575.60 612.19,575.63 615.33,576.03 618.46,575.93 621.60,575.78 624.74,575.39 627.88,575.48 631.02,575.30 634.16,575.84 637.29,575.63 640.43,575.85 643.57,575.45 646.71,575.35 649.85,575.88 652.99,576.04 656.12,575.92 659.26,575.88 662.40,575.89 662.40,575.60 662.70,503.60 663.00,460.40 663.70,447.44 664.70,439.52 666.30,434.77 668.70,432.30 671.70,431.60 674.72,431.82 677.74,431.35 680.76,431.62 683.78,431.47 686.80,431.18 689.82,431.18 692.84,431.40 695.86,431.38 698.88,431.77 701.89,432.01 704.91,431.55 707.93,431.99 710.95,432.04 713.97,432.01 716.99,431.48 720.01,431.35 723.03,431.35 726.05,431.33 726.05,431.60 726.35,503.60 726.85,529.52 727.75,556.88 729.15,568.40 730.95,573.44 733.35,575.20 736.35,575.60 739.49,575.33 742.63,575.71 745.76,575.96 748.90,575.91 752.04,575.58 755.18,575.74 758.32,575.87 761.46,575.23 764.59,575.74 767.73,575.97 770.87,575.85 774.01,575.83 777.15,575.58 780.29,575.31 783.42,575.86 786.56,575.45 789.70,575.87 789.70,575.60 790.00,503.60 790.30,460.40 791.00,447.44 792.00,439.52 793.60,434.77 796.00,432.30 799.00,431.60 802.02,432.02 805.04,431.51 808.06,431.51 811.08,432.00 814.10,431.80 817.12,431.30 820.14,431.26 823.16,431.29 826.17,431.96 829.19,431.88 832.21,431.28 835.23,431.89 838.25,432.03 841.27,431.74 844.29,431.47 847.31,431.64 850.33,431.27 853.35,431.16 853.35,431.60 853.65,503.60 854.15,529.52 855.05,556.88 856.45,568.40 858.25,573.44 860.65,575.20 863.65,575.60 866.79,576.02 869.93,575.73 873.06,575.62 876.20,575.99 879.34,575.54 882.48,575.93 885.62,575.89 888.76,575.34 891.89,575.38 895.03,575.41 898.17,575.37 901.31,575.68 904.45,575.38 907.59,575.53 910.72,575.27 913.86,575.97 917.00,575.47 917.00,575.60 917.30,503.60 917.60,460.40 918.30,447.44 919.30,439.52 920.90,434.77 923.30,432.30 926.30,431.60 929.32,431.56 932.34,431.68 935.36,431.96 938.38,431.53 941.40,431.98 944.42,431.60 947.44,431.63 950.46,431.62 953.47,431.17 956.49,431.55 959.51,431.31 962.53,431.15 965.55,431.87 968.57,431.31 971.59,431.58 974.61,431.80 977.63,431.65 980.65,431.44 980.65,431.60 980.95,503.60 981.45,529.52 982.35,556.88 983.75,568.40 985.55,573.44 987.95,575.20 990.95,575.60 994.09,575.62 997.23,575.65 1000.36,575.86 1003.50,575.25 1006.64,575.65 1009.78,575.37 1012.92,575.40 1016.06,575.85 1019.19,575.61 1022.33,575.66 1025.47,575.83 1028.61,575.97 1031.75,575.55 1034.89,575.70 1038.02,575.60 1041.16,575.61 1044.30,575.77 1044.30,575.60 1044.60,503.60 1044.90,460.40 1045.60,447.44 1046.60,439.52 1048.20,434.77 1050.60,432.30 1053.60,431.60 1056.62,431.56 1059.64,431.63 1062.66,431.58 1065.68,432.00 1068.70,431.78 1071.72,431.94 1074.74,432.00 1077.76,431.38 1080.78,431.65 1083.79,432.00 1086.81,431.91 1089.83,431.27 1092.85,431.26 1095.87,431.55 1098.89,431.22 1101.91,431.37 1104.93,431.22 1107.95,431.75 1107.95,431.60 1108.25,503.60 1108.75,529.52 1109.65,556.88 1111.05,568.40 1112.85,573.44 1115.25,575.20 1118.25,575.60 1121.39,575.86 1124.53,575.96 1127.66,575.29 1130.80,575.79 1133.94,575.74 1137.08,575.28 1140.22,575.94 1143.36,576.02 1146.49,575.35 1149.63,576.01 1152.77,575.51 1155.91,575.59 1159.05,576.04 1162.19,575.90 1165.32,575.30 1168.46,575.54 1171.60,575.61 1171.60,575.60 1171.90,503.60 1172.20,460.40 1172.90,447.44 1173.90,439.52 1175.50,434.77 1177.90,432.30 1180.90,431.60 1183.92,431.46 1186.94,431.33 1189.96,431.44 1192.98,431.80 1196.00,431.17 1199.02,431.65 1202.04,431.55 1205.06,431.17 1208.07,431.45 1211.09,431.71 1214.11,431.61 1217.13,431.21 1220.15,432.04 1223.17,431.86 1226.19,432.02 1229.21,431.24 1232.23,431.39 1235.25,431.19 1235.25,431.60 1235.55,503.60 1236.05,529.52 1236.95,556.88 1238.35,568.40 1240.15,573.44 1242.55,575.20 1245.55,575.60 1248.69,575.85 1251.83,575.39 1254.96,575.27 1258.10,575.53 1261.24,575.97 1264.38,575.89 1267.52,575.38 1270.66,575.28 1273.79,575.98 1276.93,575.66 1280.07,575.78 1283.21,575.23 1286.35,575.20 1289.49,575.77 1292.62,575.53 1295.76,575.22 1298.90,575.99 1298.90,575.60 1299.20,503.60 1299.50,460.40 1300.20,447.44 1301.20,439.52 1302.80,434.77 1305.20,432.30 1308.20,431.60 1311.22,431.72 1314.24,431.87 1317.26,431.23 1320.28,431.92 1323.30,431.21 1326.32,431.93 1329.34,431.56 1332.36,431.46 1335.38,431.65 1338.39,431.98 1341.41,431.39 1344.43,431.27 1347.45,431.62 1350.47,431.36 1353.49,431.25 1356.51,431.30 1359.53,431.20 1362.55,431.33 1362.55,431.60 1362.85,503.60 1363.35,529.52 1364.25,556.88 1365.65,568.40 1367.45,573.44 1369.85,575.20 1372.85,575.60 1375.99,575.43 1379.13,575.42 1382.26,575.83 1385.40,575.41 1388.54,575.60 1391.68,575.31 1394.82,575.46 1397.96,575.17 1401.09,575.38 1404.23,575.16 1407.37,575.81 1410.51,575.65 1413.65,575.32 1416.79,575.58 1419.92,575.99 1423.06,575.25 1426.20,575.89 1426.20,575.60 1426.50,502.40" fill="none" stroke="#f5eb3c" stroke-width="1.35" stroke-linejoin="round"/>
</g>
<g clip-path="url(#cp2)">
<polyline points="25.90,765.20 26.20,691.90 26.50,647.92 27.20,634.73 28.20,626.66 29.80,621.83 32.20,619.30 35.20,618.60 38.22,618.54 41.24,618.60 44.26,618.90 47.28,618.50 50.30,618.61 53.32,618.77 56.34,619.03 59.36,618.46 62.38,618.90 65.39,618.79 68.41,618.72 71.43,618.51 74.45,618.46 77.47,618.20 80.49,618.27 83.51,618.21 86.53,618.82 89.55,618.38 89.55,618.60 89.85,691.90 90.35,718.29 91.25,746.14 92.65,757.87 94.45,763.00 96.85,764.80 99.85,765.20 102.99,764.90 106.13,764.83 109.26,765.51 112.40,765.53 115.54,765.35 118.68,765.00 121.82,764.97 124.96,765.01 128.09,765.16 131.23,764.89 134.37,765.15 137.51,764.99 140.65,765.62 143.79,765.63 146.92,765.24 150.06,764.97 153.20,765.62 153.20,765.20 153.50,691.90 153.80,647.92 154.50,634.73 155.50,626.66 157.10,621.83 159.50,619.30 162.50,618.60 165.52,618.43 168.54,618.47 171.56,618.15 174.58,618.49 177.60,618.58 180.62,618.60 183.64,618.33 186.66,618.60 189.68,618.15 192.69,618.39 195.71,618.23 198.73,618.51 201.75,618.19 204.77,618.17 207.79,618.42 210.81,618.36 213.83,618.68 216.85,618.63 216.85,618.60 217.15,691.90 217.65,718.29 218.55,746.14 219.95,757.87 221.75,763.00 224.15,764.80 227.15,765.20 230.29,765.43 233.43,765.34 236.56,765.39 239.70,765.54 242.84,765.10 245.98,765.04 249.12,765.64 252.26,764.88 255.39,765.40 258.53,765.33 261.67,764.79 264.81,765.50 267.95,765.55 271.09,765.31 274.22,765.41 277.36,765.48 280.50,764.88 280.50,765.20 280.80,691.90 281.10,647.92 281.80,634.73 282.80,626.66 284.40,621.83 286.80,619.30 289.80,618.60 292.82,618.62 295.84,618.60 298.86,618.90 301.88,618.87 304.90,618.89 307.92,618.68 310.94,618.95 313.96,618.76 316.98,618.77 319.99,618.36 323.01,618.18 326.03,618.27 329.05,618.47 332.07,618.24 335.09,618.90 338.11,618.65 341.13,618.71 344.15,618.71 344.15,618.60 344.45,691.90 344.95,718.29 345.85,746.14 347.25,757.87 349.05,763.00 351.45,764.80 354.45,765.20 357.59,765.36 360.73,765.19 363.86,764.75 367.00,765.47 370.14,765.42 373.28,765.20 376.42,765.23 379.56,765.34 382.69,764.81 385.83,765.41 388.97,764.98 392.11,764.82 395.25,764.99 398.39,765.41 401.52,764.93 404.66,765.42 407.80,765.63 407.80,765.20 408.10,691.90 408.40,647.92 409.10,634.73 410.10,626.66 411.70,621.83 414.10,619.30 417.10,618.60 420.12,618.59 423.14,618.49 426.16,618.58 429.18,618.77 432.20,618.84 435.22,618.71 438.24,618.73 441.26,618.22 444.28,618.28 447.29,618.38 450.31,618.82 453.33,618.42 456.35,618.66 459.37,618.16 462.39,618.20 465.41,618.39 468.43,618.75 471.45,618.77 471.45,618.60 471.75,691.90 472.25,718.29 473.15,746.14 474.55,757.87 476.35,763.00 478.75,764.80 481.75,765.20 484.89,765.36 488.03,765.01 491.16,765.21 494.30,765.17 497.44,765.17 500.58,764.86 503.72,765.55 506.86,764.93 509.99,765.63 513.13,765.59 516.27,764.77 519.41,765.16 522.55,765.49 525.69,765.62 528.82,765.15 531.96,764.99 535.10,764.94 535.10,765.20 535.40,691.90 535.70,647.92 536.40,634.73 537.40,626.66 539.00,621.83 541.40,619.30 544.40,618.60 547.42,619.00 550.44,618.34 553.46,618.67 556.48,618.28 559.50,618.62 562.52,619.01 565.54,618.27 568.56,618.89 571.58,618.61 574.59,618.95 577.61,618.78 580.63,618.36 583.65,618.96 586.67,618.59 589.69,618.17 592.71,618.15 595.73,618.59 598.75,618.56 598.75,618.60 599.05,691.90 599.55,718.29 600.45,746.14 601.85,757.87 603.65,763.00 606.05,764.80 609.05,765.20 612.19,765.02 615.33,764.88 618.46,765.06 621.60,765.03 624.74,765.51 627.88,764.75 631.02,765.43 634.16,765.51 637.29,764.86 640.43,765.58 643.57,765.39 646.71,765.56 649.85,765.01 652.99,765.08 656.12,765.10 659.26,765.65 662.40,765.28 662.40,765.20 662.70,691.90 663.00,647.92 663.70,634.73 664.70,626.66 666.30,621.83 668.70,619.30 671.70,618.60 674.72,618.47 677.74,618.54 680.76,618.40 683.78,618.19 686.80,618.24 689.82,618.90 692.84,618.41 695.86,618.99 698.88,618.37 701.89,618.39 704.91,618.61 707.93,618.32 710.95,618.49 713.97,619.01 716.99,618.95 720.01,618.88 723.03,618.72 726.05,618.97 726.05,618.60 726.35,691.90 726.85,718.29 727.75,746.14 729.15,757.87 730.95,763.00 733.35,764.80 736.35,765.20 739.49,765.60 742.63,765.24 745.76,765.40 748.90,764.79 752.04,765.41 755.18,765.16 758.32,765.43 761.46,765.33 764.59,765.01 767.73,764.79 770.87,765.58 774.01,764.86 777.15,765.17 780.29,765.06 783.42,765.02 786.56,765.42 789.70,765.63 789.70,765.20 790.00,691.90 790.30,647.92 791.00,634.73 792.00,626.66 793.60,621.83 796.00,619.30 799.00,618.60 802.02,618.38 805.04,618.74 808.06,618.42 811.08,618.65 814.10,618.50 817.12,618.30 820.14,618.30 823.16,618.34 826.17,618.97 829.19,618.60 832.21,618.35 835.23,618.97 838.25,619.05 841.27,618.55 844.29,618.28 847.31,618.32 850.33,618.23 853.35,618.46 853.35,618.60 853.65,691.90 854.15,718.29 855.05,746.14 856.45,757.87 858.25,763.00 860.65,764.80 863.65,765.20 866.79,764.83 869.93,764.97 873.06,764.98 876.20,765.26 879.34,765.55 882.48,765.42 885.62,765.12 888.76,765.12 891.89,765.22 895.03,765.09 898.17,765.05 901.31,764.81 904.45,765.00 907.59,765.62 910.72,764.86 913.86,765.20 917.00,765.32 917.00,765.20 917.30,691.90 917.60,647.92 918.30,634.73 919.30,626.66 920.90,621.83 923.30,619.30 926.30,618.60 929.32,618.93 932.34,618.34 935.36,618.39 938.38,618.37 941.40,618.51 944.42,618.55 947.44,619.01 950.46,618.91 953.47,618.94 956.49,618.17 959.51,618.18 962.53,618.79 965.55,618.96 968.57,618.58 971.59,618.68 974.61,618.15 977.63,618.50 980.65,618.98 980.65,618.60 980.95,691.90 981.45,718.29 982.35,746.14 983.75,757.87 985.55,763.00 987.95,764.80 990.95,765.20 994.09,765.49 997.23,765.52 1000.36,765.63 1003.50,764.97 1006.64,764.85 1009.78,764.89 1012.92,765.22 1016.06,765.36 1019.19,765.60 1022.33,765.40 1025.47,765.33 1028.61,765.44 1031.75,765.16 1034.89,765.25 1038.02,764.79 1041.16,765.45 1044.30,764.96 1044.30,765.20 1044.60,691.90 1044.90,647.92 1045.60,634.73 1046.60,626.66 1048.20,621.83 1050.60,619.30 1053.60,618.60 1056.62,618.98 1059.64,618.73 1062.66,618.42 1065.68,618.27 1068.70,618.38 1071.72,618.72 1074.74,618.78 1077.76,618.25 1080.78,618.21 1083.79,618.62 1086.81,618.67 1089.83,618.50 1092.85,618.35 1095.87,618.69 1098.89,618.16 1101.91,618.42 1104.93,618.56 1107.95,619.01 1107.95,618.60 1108.25,691.90 1108.75,718.29 1109.65,746.14 1111.05,757.87 1112.85,763.00 1115.25,764.80 1118.25,765.20 1121.39,765.33 1124.53,765.55 1127.66,765.18 1130.80,764.96 1133.94,764.97 1137.08,765.61 1140.22,765.38 1143.36,765.03 1146.49,764.77 1149.63,765.20 1152.77,765.36 1155.91,765.13 1159.05,764.98 1162.19,765.35 1165.32,765.58 1168.46,764.95 1171.60,764.78 1171.60,765.20 1171.90,691.90 1172.20,647.92 1172.90,634.73 1173.90,626.66 1175.50,621.83 1177.90,619.30 1180.90,618.60 1183.92,618.45 1186.94,618.53 1189.96,618.76 1192.98,618.33 1196.00,618.87 1199.02,618.82 1202.04,618.60 1205.06,618.33 1208.07,619.02 1211.09,618.43 1214.11,618.89 1217.13,618.36 1220.15,618.35 1223.17,618.83 1226.19,618.42 1229.21,619.01 1232.23,618.60 1235.25,618.32 1235.25,618.60 1235.55,691.90 1236.05,718.29 1236.95,746.14 1238.35,757.87 1240.15,763.00 1242.55,764.80 1245.55,765.20 1248.69,764.95 1251.83,765.13 1254.96,765.35 1258.10,765.60 1261.24,764.88 1264.38,765.10 1267.52,764.94 1270.66,765.63 1273.79,764.88 1276.93,764.80 1280.07,764.80 1283.21,765.10 1286.35,765.56 1289.49,765.55 1292.62,765.41 1295.76,765.65 1298.90,765.59 1298.90,765.20 1299.20,691.90 1299.50,647.92 1300.20,634.73 1301.20,626.66 1302.80,621.83 1305.20,619.30 1308.20,618.60 1311.22,618.45 1314.24,618.32 1317.26,618.99 1320.28,618.82 1323.30,618.18 1326.32,618.75 1329.34,618.49 1332.36,618.49 1335.38,618.45 1338.39,618.30 1341.41,618.15 1344.43,618.40 1347.45,618.47 1350.47,619.01 1353.49,618.26 1356.51,619.02 1359.53,618.34 1362.55,618.47 1362.55,618.60 1362.85,691.90 1363.35,718.29 1364.25,746.14 1365.65,757.87 1367.45,763.00 1369.85,764.80 1372.85,765.20 1375.99,765.49 1379.13,765.49 1382.26,765.14 1385.40,764.79 1388.54,765.18 1391.68,765.09 1394.82,765.58 1397.96,764.92 1401.09,765.08 1404.23,765.56 1407.37,764.78 1410.51,765.12 1413.65,765.48 1416.79,765.44 1419.92,764.79 1423.06,764.78 1426.20,764.81 1426.20,765.20 1426.50,689.40" fill="none" stroke="#46b9b9" stroke-width="1.35" stroke-linejoin="round"/>
</g>
<g clip-path="url(#cp3)">
<polyline points="89.65,952.00 89.85,871.81 90.55,849.94 91.45,828.07 92.65,816.41 94.35,809.85 97.35,806.20 100.35,806.58 103.36,805.98 106.36,806.42 109.36,806.56 112.37,806.06 115.37,806.00 118.37,806.61 121.38,806.31 121.48,806.20 121.68,896.60 122.58,915.55 123.88,933.05 125.68,944.71 128.18,950.54 130.68,952.00 133.89,951.79 137.11,952.19 140.33,951.83 143.55,951.80 146.76,951.55 149.98,952.23 153.20,952.37 153.30,952.00 153.50,871.81 154.20,849.94 155.10,828.07 156.30,816.41 158.00,809.85 161.00,806.20 164.00,806.32 167.01,806.60 170.01,805.77 173.01,805.96 176.02,806.18 179.02,806.61 182.02,806.61 185.03,806.10 185.13,806.20 185.33,896.60 186.23,915.55 187.53,933.05 189.33,944.71 191.83,950.54 194.33,952.00 197.54,951.78 200.76,951.94 203.98,951.99 207.20,952.39 210.41,951.71 213.63,952.27 216.85,952.21 216.95,952.00 217.15,871.81 217.85,849.94 218.75,828.07 219.95,816.41 221.65,809.85 224.65,806.20 227.65,806.49 230.66,806.45 233.66,806.30 236.66,806.05 239.67,806.04 242.67,806.08 245.67,806.45 248.68,805.82 248.78,806.20 248.98,896.60 249.88,915.55 251.18,933.05 252.98,944.71 255.48,950.54 257.98,952.00 261.19,951.73 264.41,952.23 267.63,951.77 270.85,951.61 274.06,951.58 277.28,952.05 280.50,951.84 280.60,952.00 280.80,871.81 281.50,849.94 282.40,828.07 283.60,816.41 285.30,809.85 288.30,806.20 291.30,806.63 294.31,806.55 297.31,806.64 300.31,805.99 303.32,805.83 306.32,805.84 309.32,806.20 312.33,806.39 312.43,806.20 312.63,896.60 313.53,915.55 314.83,933.05 316.63,944.71 319.13,950.54 321.63,952.00 324.84,951.95 328.06,951.76 331.28,951.93 334.50,952.11 337.71,952.16 340.93,952.22 344.15,952.31 344.25,952.00 344.45,871.81 345.15,849.94 346.05,828.07 347.25,816.41 348.95,809.85 351.95,806.20 354.95,806.35 357.96,805.86 360.96,806.51 363.96,806.01 366.97,806.26 369.97,806.09 372.97,806.41 375.98,805.93 376.08,806.20 376.28,896.60 377.18,915.55 378.48,933.05 380.28,944.71 382.78,950.54 385.28,952.00 388.49,951.77 391.71,951.77 394.93,951.69 398.15,952.35 401.36,952.07 404.58,951.84 407.80,951.91 407.90,952.00 408.10,871.81 408.80,849.94 409.70,828.07 410.90,816.41 412.60,809.85 415.60,806.20 418.60,806.64 421.61,806.21 424.61,805.96 427.61,806.48 430.62,806.34 433.62,806.64 436.62,805.84 439.63,806.18 439.73,806.20 439.93,896.60 440.83,915.55 442.13,933.05 443.93,944.71 446.43,950.54 448.93,952.00 452.14,952.29 455.36,952.31 458.58,952.37 461.80,951.59 465.01,951.81 468.23,951.66 471.45,951.72 471.55,952.00 471.75,871.81 472.45,849.94 473.35,828.07 474.55,816.41 476.25,809.85 479.25,806.20 482.25,806.63 485.26,806.27 488.26,806.59 491.26,806.09 494.27,806.53 497.27,806.15 500.27,805.98 503.28,806.45 503.38,806.20 503.58,896.60 504.48,915.55 505.78,933.05 507.58,944.71 510.08,950.54 512.58,952.00 515.79,952.40 519.01,951.65 522.23,952.09 525.45,952.11 528.66,951.75 531.88,951.88 535.10,951.68 535.20,952.00 535.40,871.81 536.10,849.94 537.00,828.07 538.20,816.41 539.90,809.85 542.90,806.20 545.90,805.93 548.91,805.98 551.91,806.29 554.91,806.34 557.92,805.93 560.92,805.76 563.92,806.04 566.93,806.36 567.03,806.20 567.23,896.60 568.13,915.55 569.43,933.05 571.23,944.71 573.73,950.54 576.23,952.00 579.44,951.72 582.66,951.83 585.88,951.73 589.10,952.27 592.31,952.04 595.53,951.61 598.75,951.64 598.85,952.00 599.05,871.81 599.75,849.94 600.65,828.07 601.85,816.41 603.55,809.85 606.55,806.20 609.55,806.11 612.56,806.25 615.56,806.33 618.56,805.83 621.57,805.90 624.57,806.38 627.57,806.12 630.58,806.00 630.68,806.20 630.88,896.60 631.78,915.55 633.08,933.05 634.88,944.71 637.38,950.54 639.88,952.00 643.09,951.83 646.31,952.41 649.53,951.83 652.75,952.06 655.96,951.87 659.18,951.92 662.40,952.33 662.50,952.00 662.70,871.81 663.40,849.94 664.30,828.07 665.50,816.41 667.20,809.85 670.20,806.20 673.20,806.65 676.21,806.08 679.21,805.93 682.21,806.41 685.22,805.93 688.22,805.76 691.22,806.56 694.23,806.13 694.33,806.20 694.53,896.60 695.43,915.55 696.73,933.05 698.53,944.71 701.03,950.54 703.53,952.00 706.74,952.29 709.96,951.92 713.18,952.34 716.40,951.96 719.61,951.70 722.83,951.56 726.05,952.05 726.15,952.00 726.35,871.81 727.05,849.94 727.95,828.07 729.15,816.41 730.85,809.85 733.85,806.20 736.85,806.33 739.86,806.57 742.86,805.83 745.86,806.31 748.87,806.08 751.87,806.20 754.87,805.88 757.88,806.00 757.98,806.20 758.18,896.60 759.08,915.55 760.38,933.05 762.18,944.71 764.68,950.54 767.18,952.00 770.39,952.02 773.61,952.38 776.83,951.65 780.05,951.99 783.26,952.27 786.48,952.42 789.70,951.73 789.80,952.00 790.00,871.81 790.70,849.94 791.60,828.07 792.80,816.41 794.50,809.85 797.50,806.20 800.50,805.86 803.51,806.60 806.51,806.63 809.51,806.18 812.52,805.80 815.52,806.58 818.52,806.10 821.53,806.56 821.62,806.20 821.83,896.60 822.73,915.55 824.03,933.05 825.83,944.71 828.33,950.54 830.83,952.00 834.04,952.11 837.26,952.29 840.48,951.69 843.70,952.26 846.91,951.75 850.13,951.91 853.35,952.31 853.45,952.00 853.65,871.81 854.35,849.94 855.25,828.07 856.45,816.41 858.15,809.85 861.15,806.20 864.15,806.50 867.16,805.91 870.16,805.95 873.16,806.11 876.17,806.22 879.17,806.10 882.17,805.86 885.18,805.97 885.27,806.20 885.48,896.60 886.38,915.55 887.68,933.05 889.48,944.71 891.98,950.54 894.48,952.00 897.69,952.20 900.91,952.36 904.13,951.59 907.35,952.06 910.56,952.23 913.78,951.58 917.00,952.30 917.10,952.00 917.30,871.81 918.00,849.94 918.90,828.07 920.10,816.41 921.80,809.85 924.80,806.20 927.80,805.86 930.81,806.29 933.81,806.25 936.81,806.31 939.82,806.03 942.82,806.13 945.82,806.27 948.83,806.13 948.92,806.20 949.12,896.60 950.02,915.55 951.33,933.05 953.12,944.71 955.62,950.54 958.12,952.00 961.34,952.14 964.56,951.95 967.78,951.94 971.00,951.57 974.21,952.11 977.43,951.99 980.65,951.76 980.75,952.00 980.95,871.81 981.65,849.94 982.55,828.07 983.75,816.41 985.45,809.85 988.45,806.20 991.45,806.44 994.46,806.45 997.46,806.16 1000.46,805.91 1003.47,806.18 1006.47,805.85 1009.47,805.87 1012.48,806.14 1012.57,806.20 1012.77,896.60 1013.67,915.55 1014.98,933.05 1016.77,944.71 1019.27,950.54 1021.77,952.00 1024.99,951.63 1028.21,951.95 1031.43,952.01 1034.65,951.59 1037.86,952.12 1041.08,951.62 1044.30,952.21 1044.40,952.00 1044.60,871.81 1045.30,849.94 1046.20,828.07 1047.40,816.41 1049.10,809.85 1052.10,806.20 1055.10,806.45 1058.11,806.21 1061.11,805.80 1064.11,806.20 1067.12,806.09 1070.12,806.61 1073.12,805.87 1076.12,806.52 1076.22,806.20 1076.42,896.60 1077.33,915.55 1078.62,933.05 1080.42,944.71 1082.92,950.54 1085.42,952.00 1088.64,952.45 1091.86,952.21 1095.08,952.28 1098.30,951.72 1101.51,952.43 1104.73,951.99 1107.95,952.41 1108.05,952.00 1108.25,871.81 1108.95,849.94 1109.85,828.07 1111.05,816.41 1112.75,809.85 1115.75,806.20 1118.75,806.57 1121.76,805.90 1124.76,806.46 1127.76,806.59 1130.77,805.81 1133.77,806.07 1136.77,806.43 1139.78,805.89 1139.88,806.20 1140.08,896.60 1140.98,915.55 1142.28,933.05 1144.08,944.71 1146.58,950.54 1149.08,952.00 1152.29,952.36 1155.51,951.80 1158.73,952.28 1161.95,951.68 1165.16,952.00 1168.38,952.38 1171.60,951.74 1171.70,952.00 1171.90,871.81 1172.60,849.94 1173.50,828.07 1174.70,816.41 1176.40,809.85 1179.40,806.20 1182.40,805.99 1185.41,806.21 1188.41,806.04 1191.41,805.78 1194.42,805.91 1197.42,805.90 1200.42,806.59 1203.43,806.36 1203.53,806.20 1203.73,896.60 1204.63,915.55 1205.93,933.05 1207.73,944.71 1210.23,950.54 1212.73,952.00 1215.94,952.36 1219.16,951.70 1222.38,952.26 1225.60,951.65 1228.81,952.03 1232.03,952.12 1235.25,951.87 1235.35,952.00 1235.55,871.81 1236.25,849.94 1237.15,828.07 1238.35,816.41 1240.05,809.85 1243.05,806.20 1246.05,806.54 1249.06,806.25 1252.06,806.27 1255.06,806.54 1258.07,805.84 1261.07,806.64 1264.07,806.32 1267.08,806.10 1267.18,806.20 1267.38,896.60 1268.28,915.55 1269.58,933.05 1271.38,944.71 1273.88,950.54 1276.38,952.00 1279.59,952.27 1282.81,951.79 1286.03,952.44 1289.25,952.07 1292.46,951.87 1295.68,952.24 1298.90,951.95 1299.00,952.00 1299.20,871.81 1299.90,849.94 1300.80,828.07 1302.00,816.41 1303.70,809.85 1306.70,806.20 1309.70,805.91 1312.71,806.42 1315.71,805.79 1318.71,806.49 1321.72,805.98 1324.72,806.33 1327.72,806.64 1330.73,806.28 1330.83,806.20 1331.03,896.60 1331.93,915.55 1333.23,933.05 1335.03,944.71 1337.53,950.54 1340.03,952.00 1343.24,952.15 1346.46,951.83 1349.68,951.55 1352.90,951.58 1356.11,951.68 1359.33,952.10 1362.55,951.94 1362.65,952.00 1362.85,871.81 1363.55,849.94 1364.45,828.07 1365.65,816.41 1367.35,809.85 1370.35,806.20 1373.35,806.21 1376.36,806.56 1379.36,805.87 1382.36,805.95 1385.37,806.34 1388.37,805.77 1391.37,805.75 1394.38,806.07 1394.48,806.20 1394.68,896.60 1395.58,915.55 1396.88,933.05 1398.68,944.71 1401.18,950.54 1403.68,952.00 1406.89,951.65 1410.11,951.87 1413.33,951.75 1416.55,952.08 1419.76,952.08 1422.98,951.73 1426.20,952.11 1426.20,952.00 1426.50,879.30" fill="none" stroke="#e0344f" stroke-width="1.4" stroke-linejoin="round"/>
</g>
<text x="280.8" y="588.3" font-size="14.5" fill="#b9b9b9" font-weight="normal" text-anchor="middle" >-4 µs</text>
<text x="408.1" y="588.3" font-size="14.5" fill="#b9b9b9" font-weight="normal" text-anchor="middle" >-3 µs</text>
<text x="535.4" y="588.3" font-size="14.5" fill="#b9b9b9" font-weight="normal" text-anchor="middle" >-2 µs</text>
<text x="662.7" y="588.3" font-size="14.5" fill="#b9b9b9" font-weight="normal" text-anchor="middle" >-1 µs</text>
<text x="790.0" y="588.3" font-size="14.5" fill="#b9b9b9" font-weight="normal" text-anchor="middle" >0 s</text>
<text x="917.3" y="588.3" font-size="14.5" fill="#b9b9b9" font-weight="normal" text-anchor="middle" >1 µs</text>
<text x="1044.6" y="588.3" font-size="14.5" fill="#b9b9b9" font-weight="normal" text-anchor="middle" >2 µs</text>
<text x="1171.9" y="588.3" font-size="14.5" fill="#b9b9b9" font-weight="normal" text-anchor="middle" >3 µs</text>
<text x="1299.2" y="588.3" font-size="14.5" fill="#b9b9b9" font-weight="normal" text-anchor="middle" >4 µs</text>
<text x="1419.5" y="435.4" font-size="15" fill="#f5eb3c" font-weight="bold" text-anchor="end" >9.2 V</text>
<text x="1419.5" y="454.0" font-size="15" fill="#f5eb3c" font-weight="bold" text-anchor="end" >6.9 V</text>
<text x="1419.5" y="472.6" font-size="15" fill="#f5eb3c" font-weight="bold" text-anchor="end" >4.6 V</text>
<text x="1419.5" y="491.2" font-size="15" fill="#f5eb3c" font-weight="bold" text-anchor="end" >2.3 V</text>
<text x="1419.5" y="528.4" font-size="15" fill="#f5eb3c" font-weight="bold" text-anchor="end" >-2.3 V</text>
<text x="1419.5" y="547.0" font-size="15" fill="#f5eb3c" font-weight="bold" text-anchor="end" >-4.6 V</text>
<text x="1419.5" y="565.6" font-size="15" fill="#f5eb3c" font-weight="bold" text-anchor="end" >-6.9 V</text>
<text x="1419.5" y="584.2" font-size="15" fill="#f5eb3c" font-weight="bold" text-anchor="end" >-9.2 V</text>
<text x="1411" y="510" font-size="14" fill="#f5eb3c" font-weight="bold" text-anchor="end" >0</text>
<text x="1419.5" y="622.4" font-size="15" fill="#35c9c9" font-weight="bold" text-anchor="end" >920 mV</text>
<text x="1419.5" y="641.0" font-size="15" fill="#35c9c9" font-weight="bold" text-anchor="end" >690 mV</text>
<text x="1419.5" y="659.6" font-size="15" fill="#35c9c9" font-weight="bold" text-anchor="end" >460 mV</text>
<text x="1419.5" y="678.2" font-size="15" fill="#35c9c9" font-weight="bold" text-anchor="end" >230 mV</text>
<text x="1419.5" y="696.8" font-size="15" fill="#35c9c9" font-weight="bold" text-anchor="end" >0 V</text>
<text x="1419.5" y="715.4" font-size="15" fill="#35c9c9" font-weight="bold" text-anchor="end" >-230 mV</text>
<text x="1419.5" y="734.0" font-size="15" fill="#35c9c9" font-weight="bold" text-anchor="end" >-460 mV</text>
<text x="1419.5" y="752.6" font-size="15" fill="#35c9c9" font-weight="bold" text-anchor="end" >-690 mV</text>
<text x="1419.5" y="771.2" font-size="15" fill="#35c9c9" font-weight="bold" text-anchor="end" >-920 mV</text>
<text x="1419.5" y="812.3" font-size="15" fill="#ec4560" font-weight="bold" text-anchor="end" >920 mV</text>
<text x="1419.5" y="830.9" font-size="15" fill="#ec4560" font-weight="bold" text-anchor="end" >690 mV</text>
<text x="1419.5" y="849.5" font-size="15" fill="#ec4560" font-weight="bold" text-anchor="end" >460 mV</text>
<text x="1419.5" y="868.1" font-size="15" fill="#ec4560" font-weight="bold" text-anchor="end" >230 mV</text>
<text x="1419.5" y="886.7" font-size="15" fill="#ec4560" font-weight="bold" text-anchor="end" >0 V</text>
<text x="1419.5" y="905.3" font-size="15" fill="#ec4560" font-weight="bold" text-anchor="end" >-230 mV</text>
<text x="1419.5" y="923.9" font-size="15" fill="#ec4560" font-weight="bold" text-anchor="end" >-460 mV</text>
<text x="1419.5" y="942.5" font-size="15" fill="#ec4560" font-weight="bold" text-anchor="end" >-690 mV</text>
<text x="1419.5" y="961.1" font-size="15" fill="#ec4560" font-weight="bold" text-anchor="end" >-920 mV</text>
<rect x="1375" y="430.2" width="2.2" height="1.8" fill="#f5eb3c"/>
<rect x="1375" y="448.8" width="2.2" height="1.8" fill="#f5eb3c"/>
<rect x="1375" y="467.4" width="2.2" height="1.8" fill="#f5eb3c"/>
<rect x="1375" y="486.0" width="2.2" height="1.8" fill="#f5eb3c"/>
<rect x="1375" y="523.2" width="2.2" height="1.8" fill="#f5eb3c"/>
<rect x="1375" y="541.8" width="2.2" height="1.8" fill="#f5eb3c"/>
<rect x="1375" y="560.4" width="2.2" height="1.8" fill="#f5eb3c"/>
<rect x="1375" y="579.0" width="2.2" height="1.8" fill="#f5eb3c"/>
<path d="M1402 502 L1416 490.5 V499.5 H1427 V504.8 H1416 V513.5 Z" fill="#f5eb3c"/>
<path d="M160.5 487 H188.5 L204 502.5 L188.5 519 H160.5 Q158 519 158 516.5 V489.5 Q158 487 160.5 487 Z" fill="#f7ec3a"/>
<text x="181" y="507.5" font-size="13" fill="#222" font-weight="normal" text-anchor="middle" textLength="21" lengthAdjust="spacingAndGlyphs" >C 1</text>
<path d="M160.5 674.2 H188.5 L204 690 L188.5 706 H160.5 Q157.7 706 157.7 703.2 V677 Q157.7 674.2 160.5 674.2 Z" fill="#0c2b2c" stroke="#2c9a9a" stroke-width="1.5"/>
<text x="181" y="695" font-size="13" fill="#3dd" font-weight="bold" text-anchor="middle" textLength="21" lengthAdjust="spacingAndGlyphs" >C 2</text>
<path d="M160.5 862.2 H188.5 L204 877.5 L188.5 894.2 H160.5 Q157.7 894.2 157.7 891.4 V865 Q157.7 862.2 160.5 862.2 Z" fill="#2b0a11" stroke="#c23a50" stroke-width="1.5"/>
<text x="181" y="883" font-size="13" fill="#fff" font-weight="bold" text-anchor="middle" textLength="21" lengthAdjust="spacingAndGlyphs" >C 3</text>
<path d="M780.5 414.5 H798.5 L789.5 423.5 Z" fill="#f08a2c"/>
<rect x="778.5" y="423.0" width="22" height="21" fill="#000" stroke="#f08a2c" stroke-width="3"/>
<path d="M784.5 443.5 L789.5 454.5 L794.5 443.5 Z" fill="#f08a2c"/>
<path d="M786.5 444.1 L789.5 448.0 L792.5 444.1 Z" fill="#000"/>
<text x="789.5" y="440.0" font-size="15" fill="#f0a050" font-weight="bold" text-anchor="middle" >T</text>
<rect x="1437.8" y="575.9" width="3.4" height="3.2" fill="#c8c8c8"/>
<rect x="1437.8" y="582.9" width="3.4" height="3.2" fill="#c8c8c8"/>
<rect x="1437.8" y="589.9" width="3.4" height="3.2" fill="#c8c8c8"/>
<path d="M1448.5 975 V192.5 H1648" fill="none" stroke="#585858" stroke-width="1.2"/>
<line x1="1448.5" y1="975" x2="1648" y2="975" stroke="#585858" stroke-width="1.2"/>
<rect x="1457.5" y="205" width="85" height="50" rx="7" fill="url(#btn)" stroke="#565656" stroke-width="1.5"/>
<text x="1500.0" y="234.2" font-size="19" fill="#fff" font-weight="normal" text-anchor="middle" textLength="66" lengthAdjust="spacingAndGlyphs"  stroke="#fff" stroke-width="0.55">Cursors</text>
<rect x="1553" y="205" width="85" height="50" rx="7" fill="url(#btn)" stroke="#565656" stroke-width="1.5"/>
<text x="1595.5" y="234.2" font-size="19" fill="#fff" font-weight="normal" text-anchor="middle" textLength="65" lengthAdjust="spacingAndGlyphs"  stroke="#fff" stroke-width="0.55">Callout</text>
<rect x="1457.5" y="266" width="85" height="50" rx="7" fill="url(#btn)" stroke="#565656" stroke-width="1.5"/>
<text x="1500.0" y="295.2" font-size="19" fill="#fff" font-weight="normal" text-anchor="middle" textLength="77.5" lengthAdjust="spacingAndGlyphs"  stroke="#fff" stroke-width="0.55">Measure</text>
<rect x="1553" y="266" width="85" height="50" rx="7" fill="url(#btn)" stroke="#565656" stroke-width="1.5"/>
<text x="1595.5" y="295.2" font-size="19" fill="#fff" font-weight="normal" text-anchor="middle" textLength="60" lengthAdjust="spacingAndGlyphs"  stroke="#fff" stroke-width="0.55">Search</text>
<line x1="1452" y1="326" x2="1643.5" y2="326" stroke="#4d4d4d" stroke-width="1.3"/>
<rect x="1457" y="332.5" width="86" height="51" rx="7" fill="url(#btn)" stroke="#565656" stroke-width="1.5"/>
<rect x="1553" y="332.5" width="85.5" height="51" rx="7" fill="url(#btn)" stroke="#565656" stroke-width="1.5"/>
<text x="1587.5" y="362.3" font-size="19" fill="#fff" font-weight="normal" text-anchor="middle" textLength="48" lengthAdjust="spacingAndGlyphs"  stroke="#fff" stroke-width="0.55">More</text>
<line x1="1452" y1="395" x2="1643.5" y2="395" stroke="#4d4d4d" stroke-width="1.3"/>
<rect x="1485.5" y="344.3" width="25" height="22.3" fill="none" stroke="#b0b0b0" stroke-width="2.6" stroke-dasharray="3.4 2.2"/>
<circle cx="1500.8" cy="352.8" r="4.6" fill="none" stroke="#b0b0b0" stroke-width="1.6"/>
<line x1="1497.5" y1="356.3" x2="1491.5" y2="361.8" stroke="#b0b0b0" stroke-width="3" stroke-linecap="round"/>
<path d="M1506.5 361.5 L1516.5 366.5 L1512.8 367.6 L1515.8 372 L1514 373 L1511 368.8 L1508.5 371.5 Z" fill="#c4c4c4"/>
<rect x="1453" y="410" width="190" height="77" rx="4" fill="#c9c9c9"/>
<path d="M1453 435.4 V414 Q1453 410 1457 410 H1639 Q1643 410 1643 414 V435.4 Z" fill="#585858"/>
<rect x="1453" y="435.4" width="190" height="2" fill="#b0b0b0"/>
<text x="1460.5" y="427.5" font-size="19" fill="#fff" font-weight="normal" text-anchor="start" textLength="62" lengthAdjust="spacingAndGlyphs"  stroke="#fff" stroke-width="0.55">Meas 1</text>
<rect x="1606" y="415" width="30.4" height="16.3" rx="5" fill="#e93a5c"/>
<text x="1621.2" y="427.15" font-size="11" fill="#fff" font-weight="normal" text-anchor="middle" >3</text>
<text x="1460.6" y="452.6" font-size="18" fill="#1a1a1a" font-weight="normal" text-anchor="start" textLength="80" lengthAdjust="spacingAndGlyphs" >Minimum</text>
<text x="1460.6" y="477.5" font-size="18" fill="#1a1a1a" font-weight="normal" text-anchor="start" textLength="117" lengthAdjust="spacingAndGlyphs" >µ': -898.4 mV</text>
<rect x="1453" y="494" width="190" height="77" rx="4" fill="#c9c9c9"/>
<path d="M1453 519 V498 Q1453 494 1457 494 H1639 Q1643 494 1643 498 V519 Z" fill="#585858"/>
<rect x="1453" y="519" width="190" height="2" fill="#b0b0b0"/>
<text x="1460.5" y="511.5" font-size="19" fill="#fff" font-weight="normal" text-anchor="start" textLength="62" lengthAdjust="spacingAndGlyphs"  stroke="#fff" stroke-width="0.55">Meas 2</text>
<rect x="1606" y="499.5" width="30.4" height="16.3" rx="5" fill="#1fc6d2"/>
<text x="1621.2" y="511.65" font-size="11" fill="#123" font-weight="normal" text-anchor="middle" >2</text>
<text x="1460.6" y="537.3" font-size="18" fill="#1a1a1a" font-weight="normal" text-anchor="start" textLength="51" lengthAdjust="spacingAndGlyphs" >Period</text>
<text x="1460.6" y="561.7" font-size="18" fill="#1a1a1a" font-weight="normal" text-anchor="start" textLength="111.4" lengthAdjust="spacingAndGlyphs" >µ': 1000.0 ns</text>
<rect x="1453" y="580.3" width="190" height="178.7" rx="4" fill="#c9c9c9"/>
<path d="M1453 603.8 V584.3 Q1453 580.3 1457 580.3 H1639 Q1643 580.3 1643 584.3 V603.8 Z" fill="#000"/>
<rect x="1453" y="603.8" width="190" height="2" fill="#b0b0b0"/>
<text x="1460.5" y="597.8" font-size="19" fill="#fff" font-weight="normal" text-anchor="start" textLength="62" lengthAdjust="spacingAndGlyphs"  stroke="#fff" stroke-width="0.55">Meas 3</text>
<rect x="1606" y="586" width="30.4" height="13.6" rx="5" fill="#e93a5c"/>
<text x="1621.2" y="596.8" font-size="11" fill="#fff" font-weight="normal" text-anchor="middle" >3</text>
<text x="1460.6" y="622.5" font-size="18" fill="#1a1a1a" font-weight="normal" text-anchor="start" textLength="83" lengthAdjust="spacingAndGlyphs" >Maximum</text>
<text x="1460.6" y="648" font-size="18" fill="#1a1a1a" font-weight="normal" text-anchor="start" textLength="111" lengthAdjust="spacingAndGlyphs" >µ': 950.8 mV</text>
<text x="1460.6" y="673.2" font-size="18" fill="#1a1a1a" font-weight="normal" text-anchor="start" textLength="152.6" lengthAdjust="spacingAndGlyphs" >σ': 0.000 V (N'=1)</text>
<rect x="1460" y="680.3" width="175" height="1.8" fill="#9a9a9a"/>
<text x="1460.6" y="698.4" font-size="18" fill="#1a1a1a" font-weight="normal" text-anchor="start" textLength="111" lengthAdjust="spacingAndGlyphs" >M: 960.0 mV</text>
<text x="1460.6" y="723.9" font-size="18" fill="#1a1a1a" font-weight="normal" text-anchor="start" textLength="110" lengthAdjust="spacingAndGlyphs" >m: 950.8 mV</text>
<text x="1460.6" y="747.9" font-size="18" fill="#1a1a1a" font-weight="normal" text-anchor="start" textLength="56" lengthAdjust="spacingAndGlyphs" >N: 256</text>
<rect x="153.7" y="980" width="118.3" height="102" rx="4" fill="#c9c9c9"/>
<path d="M153.7 1005 V984 Q153.7 980 157.7 980 H268.0 Q272.0 980 272.0 984 V1005 Z" fill="#fff23c"/>
<rect x="153.7" y="1005" width="118.3" height="2" fill="#b0b0b0"/>
<text x="161.2" y="997.5" font-size="20" fill="#111" font-weight="normal" text-anchor="start" textLength="38.4" lengthAdjust="spacingAndGlyphs"  stroke="#111" stroke-width="0.3">Ch 1</text>
<text x="161.0" y="1022" font-size="18" fill="#1a1a1a" font-weight="normal" text-anchor="start" textLength="74" lengthAdjust="spacingAndGlyphs" >2.3 V/div</text>
<text x="161.0" y="1047.7" font-size="18" fill="#1a1a1a" font-weight="normal" text-anchor="start" textLength="37.5" lengthAdjust="spacingAndGlyphs" >10 X</text>
<text x="161.0" y="1073.2" font-size="18" fill="#1a1a1a" font-weight="normal" text-anchor="start" textLength="77.5" lengthAdjust="spacingAndGlyphs" >500 MHz</text>
<rect x="275" y="980" width="118" height="102" rx="4" fill="#c9c9c9"/>
<path d="M275 1005 V984 Q275 980 279 980 H389 Q393 980 393 984 V1005 Z" fill="#1f4748"/>
<rect x="275" y="1005" width="118" height="2" fill="#b0b0b0"/>
<text x="282.5" y="997.5" font-size="20" fill="#3cd3d3" font-weight="normal" text-anchor="start" textLength="40.7" lengthAdjust="spacingAndGlyphs"  stroke="#3cd3d3" stroke-width="0.55">Ch 2</text>
<text x="282.3" y="1022" font-size="18" fill="#1a1a1a" font-weight="normal" text-anchor="start" textLength="96.5" lengthAdjust="spacingAndGlyphs" >230 mV/div</text>
<text x="282.3" y="1047.7" font-size="18" fill="#1a1a1a" font-weight="normal" text-anchor="start" textLength="37.5" lengthAdjust="spacingAndGlyphs" >10 X</text>
<text x="282.3" y="1073.2" font-size="18" fill="#1a1a1a" font-weight="normal" text-anchor="start" textLength="77.5" lengthAdjust="spacingAndGlyphs" >500 MHz</text>
<rect x="397" y="980" width="118" height="102" rx="4" fill="#c9c9c9"/>
<path d="M397 1005 V984 Q397 980 401 980 H511 Q515 980 515 984 V1005 Z" fill="#4b252b"/>
<rect x="397" y="1005" width="118" height="2" fill="#b0b0b0"/>
<text x="404.5" y="997.5" font-size="20" fill="#fff" font-weight="normal" text-anchor="start" textLength="40.3" lengthAdjust="spacingAndGlyphs"  stroke="#fff" stroke-width="0.55">Ch 3</text>
<text x="404.3" y="1022" font-size="18" fill="#1a1a1a" font-weight="normal" text-anchor="start" textLength="96.5" lengthAdjust="spacingAndGlyphs" >230 mV/div</text>
<text x="404.3" y="1047.7" font-size="18" fill="#1a1a1a" font-weight="normal" text-anchor="start" textLength="37.5" lengthAdjust="spacingAndGlyphs" >10 X</text>
<text x="404.3" y="1073.2" font-size="18" fill="#1a1a1a" font-weight="normal" text-anchor="start" textLength="77.5" lengthAdjust="spacingAndGlyphs" >500 MHz</text>
<rect x="1001" y="980.3" width="57.6" height="101" rx="6" fill="url(#btn)" stroke="#565656" stroke-width="1.5"/>
<rect x="1008.7" y="990" width="43.3" height="4" fill="#8dc63f"/>
<text x="1030" y="1045" font-size="25" fill="#fff" font-weight="normal" text-anchor="middle" >4</text>
<line x1="1065.5" y1="980" x2="1065.5" y2="1082" stroke="#5a5a5a" stroke-width="1.2"/>
<line x1="1137.2" y1="980" x2="1137.2" y2="1082" stroke="#5a5a5a" stroke-width="1.2"/>
<line x1="1208.9" y1="980" x2="1208.9" y2="1082" stroke="#5a5a5a" stroke-width="1.2"/>
<line x1="1513.8" y1="980" x2="1513.8" y2="1082" stroke="#5a5a5a" stroke-width="1.2"/>
<rect x="1072" y="980.3" width="58" height="101" rx="6" fill="url(#btn)" stroke="#565656" stroke-width="1.5"/>
<text x="1101.3" y="1021.5" font-size="19" fill="#fff" font-weight="normal" text-anchor="middle"  stroke="#fff" stroke-width="0.55">Math</text>
<text x="1101.3" y="1042.5" font-size="19" fill="#fff" font-weight="normal" text-anchor="middle"  stroke="#fff" stroke-width="0.55">Ref</text>
<text x="1101.3" y="1063.5" font-size="19" fill="#fff" font-weight="normal" text-anchor="middle"  stroke="#fff" stroke-width="0.55">Bus</text>
<rect x="1144.3" y="980.3" width="57.3" height="101" rx="6" fill="url(#btn)" stroke="#565656" stroke-width="1.5"/>
<rect x="1152" y="990" width="43" height="4" fill="#565656"/>
<text x="1172" y="1042.5" font-size="19" fill="#fff" font-weight="normal" text-anchor="middle" textLength="36" lengthAdjust="spacingAndGlyphs"  stroke="#fff" stroke-width="0.55">AFG</text>
<rect x="1216" y="980.7" width="127" height="100.7" rx="4" fill="#c9c9c9"/>
<path d="M1216 1005.7 V984.7 Q1216 980.7 1220 980.7 H1339 Q1343 980.7 1343 984.7 V1005.7 Z" fill="#4d4d4d"/>
<rect x="1216" y="1005.7" width="127" height="2" fill="#b0b0b0"/>
<text x="1223.5" y="998.2" font-size="20" fill="#fff" font-weight="normal" text-anchor="start" textLength="97" lengthAdjust="spacingAndGlyphs"  stroke="#fff" stroke-width="0.55">Horizontal</text>
<text x="1222.5" y="1022" font-size="18" fill="#1a1a1a" font-weight="normal" text-anchor="start" textLength="75" lengthAdjust="spacingAndGlyphs" >10 µs/div</text>
<text x="1222" y="1047.3" font-size="18" fill="#1a1a1a" font-weight="normal" text-anchor="start" textLength="113" lengthAdjust="spacingAndGlyphs" >SR: 1.25 GS/s</text>
<text x="1222" y="1072.7" font-size="18" fill="#1a1a1a" font-weight="normal" text-anchor="start" textLength="103" lengthAdjust="spacingAndGlyphs" >RL: 125 kpts</text>
<rect x="1348" y="980.7" width="157" height="100.7" rx="4" fill="#c9c9c9"/>
<path d="M1348 1006.2 V984.7 Q1348 980.7 1352 980.7 H1501 Q1505 980.7 1505 984.7 V1006.2 Z" fill="#585858"/>
<rect x="1348" y="1006.2" width="157" height="2" fill="#b0b0b0"/>
<text x="1355.5" y="998.2" font-size="21" fill="#fff" font-weight="normal" text-anchor="start" textLength="65" lengthAdjust="spacingAndGlyphs" >Trigger</text>
<rect x="1442.3" y="984.4" width="39.6" height="20.6" rx="5.5" fill="#fff03a" stroke="#111" stroke-width="1"/>
<text x="1461.8" y="997.6" font-size="16" fill="#222" font-weight="normal" text-anchor="middle" >1</text>
<path d="M1354 1024.5 H1359 L1369 1013.5 H1375" fill="none" stroke="#7a7aa8" stroke-width="1.8"/>
<text x="1388.5" y="1022" font-size="18" fill="#1a1a1a" font-weight="normal" text-anchor="start" textLength="65.4" lengthAdjust="spacingAndGlyphs" >184 mV</text>
<rect x="1520.5" y="984" width="118" height="41.5" rx="5" fill="#1fce1f"/>
<text x="1536" y="1008.5" font-size="18" fill="#fff" font-weight="bold" text-anchor="start" textLength="86.4" lengthAdjust="spacingAndGlyphs" stroke="#fff" stroke-width="0.5">Triggered</text>
<rect x="1520" y="1031" width="118.4" height="50.4" rx="5" fill="#c9c9c9"/>
<text x="1524.5" y="1049.3" font-size="18.5" fill="#1a1a1a" font-weight="normal" text-anchor="start" textLength="107" lengthAdjust="spacingAndGlyphs" >21 Dec 2021</text>
<text x="1530" y="1071.3" font-size="18.5" fill="#1a1a1a" font-weight="normal" text-anchor="start" textLength="99.5" lengthAdjust="spacingAndGlyphs" >1:28:25 AM</text>
<text x="1590.9" y="1115.3" font-size="16" fill="#111" font-weight="normal" text-anchor="start" textLength="57" lengthAdjust="spacingAndGlyphs" >3764-010</text>
<path d="M150.3 149 V147 A20 20 0 0 1 170.3 127 H821 Q841 127 841 107 V96 M841 107 Q841 127 861 127 H1408 A20 20 0 0 1 1428 147 V149" fill="none" stroke="#fb980f" stroke-width="4.8"/>
<path d="M152 416 H148 A20 20 0 0 0 128 436 V610 Q128 630 108 630 H94 M108 630 Q128 630 128 650 V952 A20 20 0 0 0 148 972 H152" fill="none" stroke="#fb980f" stroke-width="4.8"/>
<path d="M163.9 375 H1223.1 A19.4 19.4 0 0 1 1242.5 394.4 V394.5 A19.4 19.4 0 0 1 1223.1 413.9 H163.9 A19.4 19.4 0 0 1 144.5 394.5 V394.4 A19.4 19.4 0 0 1 163.9 375 Z" fill="none" stroke="#fff" stroke-width="6.5"/>
<path d="M163.9 375 H1223.1 A19.4 19.4 0 0 1 1242.5 394.4 V394.5 A19.4 19.4 0 0 1 1223.1 413.9 H163.9 A19.4 19.4 0 0 1 144.5 394.5 V394.4 A19.4 19.4 0 0 1 163.9 375 Z" fill="none" stroke="#fb980f" stroke-width="3.5" stroke-dasharray="24.5 9" stroke-dashoffset="-8"/>
<path d="M1369 227 H1423.6 A14 14 0 0 1 1437.6 241 V277.8 A14 14 0 0 1 1423.6 291.8 H1369 A14 14 0 0 1 1355 277.8 V241 A14 14 0 0 1 1369 227 Z" fill="none" stroke="#fff" stroke-width="8.6"/>
<path d="M1369 227 H1423.6 A14 14 0 0 1 1437.6 241 V277.8 A14 14 0 0 1 1423.6 291.8 H1369 A14 14 0 0 1 1355 277.8 V241 A14 14 0 0 1 1369 227 Z" fill="none" stroke="#fb980f" stroke-width="4.2" stroke-dasharray="24.5 9" stroke-dashoffset="-20"/>
<path d="M1468.6 327 H1533.0 A15 15 0 0 1 1548.0 342 V376.6 A15 15 0 0 1 1533.0 391.6 H1468.6 A15 15 0 0 1 1453.6 376.6 V342 A15 15 0 0 1 1468.6 327 Z" fill="none" stroke="#fff" stroke-width="8.6"/>
<path d="M1468.6 327 H1533.0 A15 15 0 0 1 1548.0 342 V376.6 A15 15 0 0 1 1533.0 391.6 H1468.6 A15 15 0 0 1 1453.6 376.6 V342 A15 15 0 0 1 1468.6 327 Z" fill="none" stroke="#fb980f" stroke-width="4.2" stroke-dasharray="24.5 9" stroke-dashoffset="-19"/>
<line x1="90" y1="394.4" x2="144" y2="394.4" stroke="#fb980f" stroke-width="3.6"/>
<circle cx="144.3" cy="394.4" r="10.0" fill="#fff"/>
<circle cx="144.3" cy="394.4" r="8.6" fill="#fb980f"/>
<line x1="933.5" y1="100" x2="842" y2="231.5" stroke="#fff" stroke-width="7.4"/>
<line x1="933.5" y1="100" x2="842" y2="231.5" stroke="#fb980f" stroke-width="4.4"/>
<circle cx="842" cy="231.5" r="10.8" fill="#fff"/>
<circle cx="842" cy="231.5" r="9.4" fill="#fb980f"/>
<line x1="1580" y1="112.8" x2="1433.8" y2="235.5" stroke="#fff" stroke-width="7.4"/>
<line x1="1580" y1="112.8" x2="1433.8" y2="235.5" stroke="#fb980f" stroke-width="4.4"/>
<circle cx="1433.8" cy="235.5" r="10.6" fill="#fff"/>
<circle cx="1433.8" cy="235.5" r="9.2" fill="#fb980f"/>
<line x1="1528.7" y1="359.4" x2="1682" y2="359.4" stroke="#fff" stroke-width="7.4"/>
<line x1="1528.7" y1="359.4" x2="1682" y2="359.4" stroke="#fb980f" stroke-width="4.4"/>
<circle cx="1528.7" cy="359.4" r="10.8" fill="#fff"/>
<circle cx="1528.7" cy="359.4" r="9.4" fill="#fb980f"/>
<circle cx="841" cy="54.5" r="42" fill="#fb980f" stroke="#1a1a1a" stroke-width="1.6"/>
<text x="841" y="68.7" font-size="56" fill="#000" font-weight="bold" text-anchor="middle" textLength="26" lengthAdjust="spacingAndGlyphs" >1</text>
<circle cx="949.5" cy="59" r="42" fill="#fb980f" stroke="#1a1a1a" stroke-width="1.6"/>
<text x="949.5" y="73.2" font-size="56" fill="#000" font-weight="bold" text-anchor="middle" textLength="26" lengthAdjust="spacingAndGlyphs" >2</text>
<circle cx="1597.5" cy="81.5" r="42" fill="#fb980f" stroke="#1a1a1a" stroke-width="1.6"/>
<text x="1597.5" y="95.7" font-size="56" fill="#000" font-weight="bold" text-anchor="middle" textLength="26" lengthAdjust="spacingAndGlyphs" >3</text>
<circle cx="1722.5" cy="360" r="42" fill="#fb980f" stroke="#1a1a1a" stroke-width="1.6"/>
<text x="1722.5" y="374.2" font-size="56" fill="#000" font-weight="bold" text-anchor="middle" textLength="26" lengthAdjust="spacingAndGlyphs" >4</text>
<circle cx="53.4" cy="630" r="42" fill="#fb980f" stroke="#1a1a1a" stroke-width="1.6"/>
<text x="53.4" y="644.2" font-size="56" fill="#000" font-weight="bold" text-anchor="middle" textLength="26" lengthAdjust="spacingAndGlyphs" >5</text>
<circle cx="49" cy="395.3" r="42" fill="#fb980f" stroke="#1a1a1a" stroke-width="1.6"/>
<text x="49" y="409.5" font-size="56" fill="#000" font-weight="bold" text-anchor="middle" textLength="26" lengthAdjust="spacingAndGlyphs" >6</text>
</svg>
</body></html>
